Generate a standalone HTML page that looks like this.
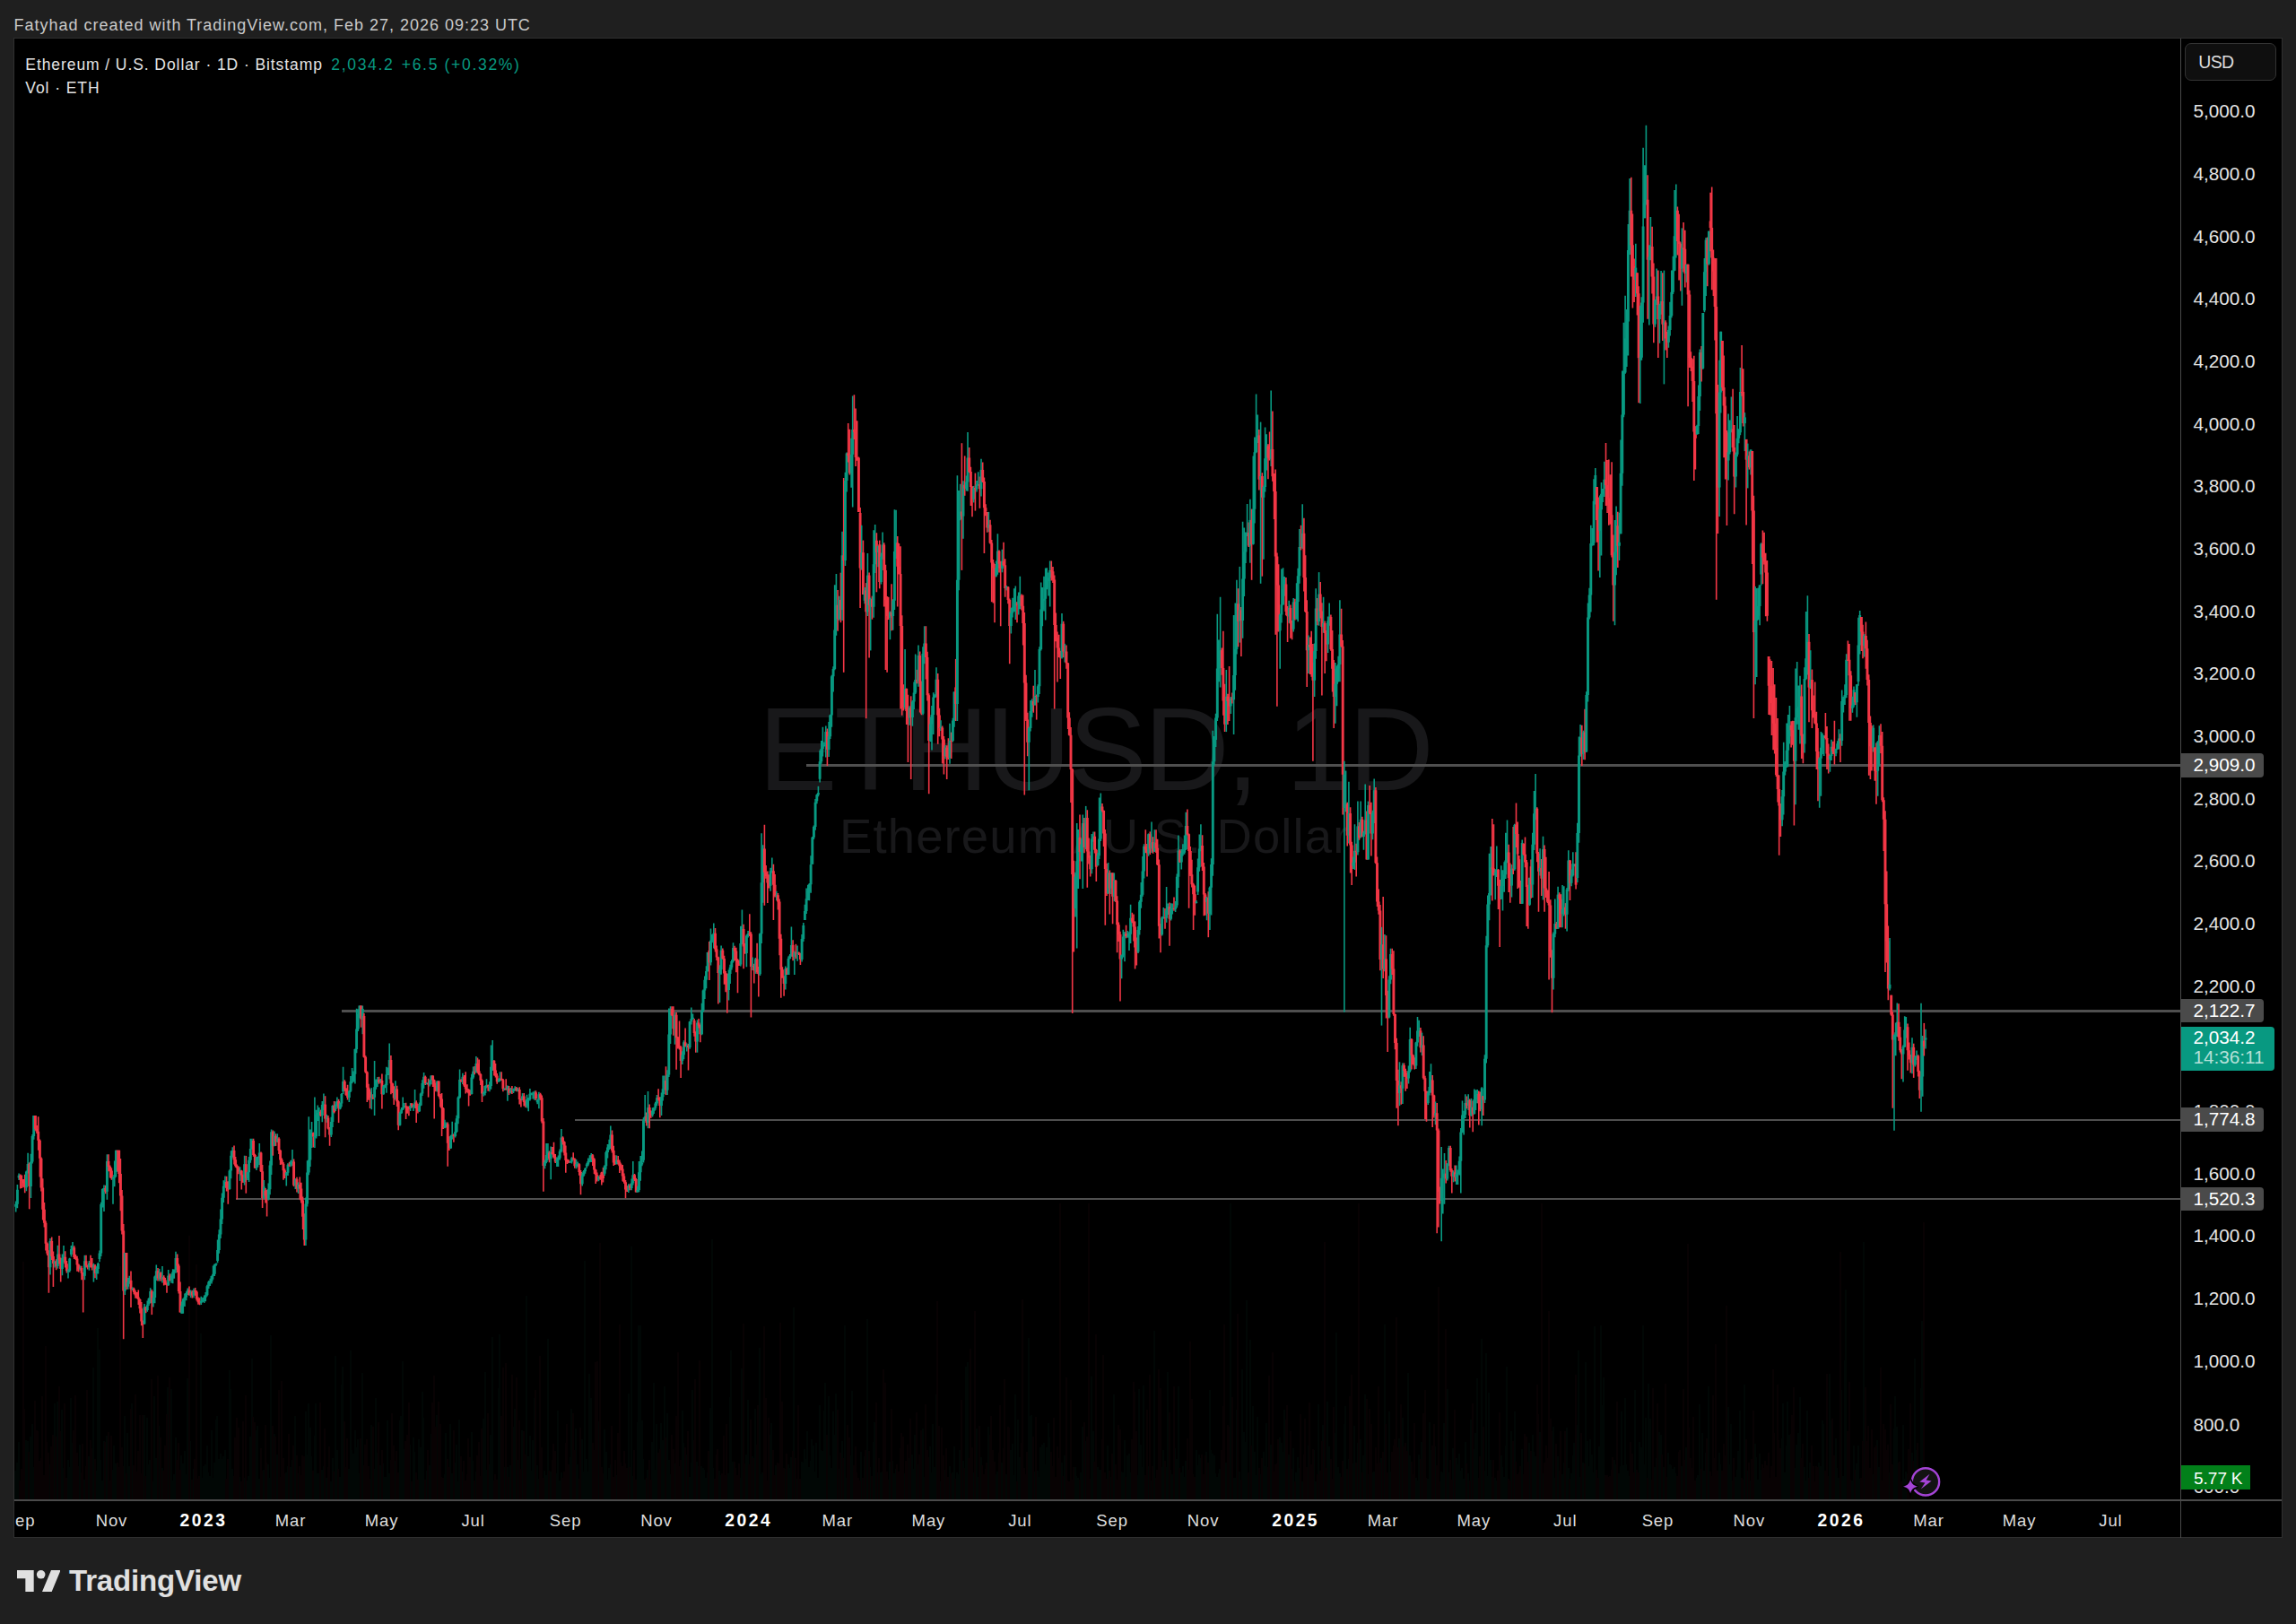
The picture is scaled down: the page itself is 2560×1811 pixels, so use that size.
<!DOCTYPE html>
<html lang="en"><head><meta charset="utf-8"><title>ETHUSD 1D</title>
<style>
html,body{margin:0;padding:0}
body{width:2560px;height:1811px;background:#1f1f1f;position:relative;overflow:hidden;font-family:"Liberation Sans",Arial,sans-serif;color:#d6d6d6}
.hdr{position:absolute;left:15.5px;top:17.3px;font-size:18px;line-height:22px;color:#c9c9c9;white-space:nowrap;letter-spacing:.99px}
.box{position:absolute;left:15px;top:42px;width:2529.7px;height:1673px;background:#000;border:1px solid #2f2f2f;box-sizing:border-box}
.vsep{position:absolute;left:2430.5px;top:43px;width:1.6px;height:1672px;background:#4a4a4a}
.hsep{position:absolute;left:16px;top:1672px;width:2528px;height:2px;background:#4a4a4a}
.wm{position:absolute;left:16px;width:2415px;text-align:center;color:#18181a;white-space:nowrap}
.wm1{top:763.8px;font-size:132px;line-height:144px;letter-spacing:-3.5px;text-indent:-6px}
.wm2{top:902.7px;font-size:54.5px;line-height:60px;letter-spacing:1.1px;text-indent:-5.5px}
.chart{position:absolute;left:0;top:0}
.leg{position:absolute;left:28.3px;white-space:nowrap;font-size:17.5px;line-height:22px;color:#e3e3e3;letter-spacing:.92px}
.leg1{top:60.7px}.leg2{top:87.3px}
.leg .g{color:#089981;position:absolute;top:0;letter-spacing:1.68px}
.axis{position:absolute;left:2432px;top:0;width:112px;height:1672px;overflow:hidden}
.pl{position:absolute;left:13.5px;font-size:20.7px;line-height:24px;height:24px;color:#e4e4e4;white-space:nowrap}
.tag{position:absolute;left:0;width:92px;height:26.8px;background:#4a4a4a;border-radius:0 4px 4px 0;font-size:20.7px;line-height:26.8px;color:#fff;text-indent:13.5px;white-space:nowrap}
.cur{position:absolute;left:0;top:1145.2px;width:104.2px;height:48.6px;background:#089981;border-radius:0 4px 4px 0;color:#fff;font-size:20.7px;white-space:nowrap}
.cur div{position:absolute;left:13.5px;line-height:24px}
.cur .t{top:22px;color:#b5e0d8}
.cur .p{top:0.1px}
.volt{position:absolute;left:0;top:1634px;width:77px;height:26.6px;background:#02801a;color:#fff;font-size:19px;line-height:29.6px;text-indent:14px;white-space:nowrap;word-spacing:-.6px;overflow:hidden}
.usd{position:absolute;left:2435.8px;top:47.9px;width:102px;height:42.2px;box-sizing:border-box;border:1px solid #333;border-radius:7px;background:#0f0f0f;font-size:19.5px;line-height:40.2px;text-indent:14.5px;color:#dcdcdc;letter-spacing:-.7px}
.taxis{position:absolute;left:16px;top:1674px;width:2415px;height:41px;overflow:hidden}
.tl{position:absolute;top:10px;width:100px;text-align:center;font-size:18.5px;line-height:24px;color:#dedede;letter-spacing:.9px;text-indent:.9px;white-space:nowrap}
.tl.b{font-weight:bold;color:#fff;font-size:19.3px;letter-spacing:2.5px;text-indent:2.5px}
.logo{position:absolute;left:19px;top:1751px}
.logot{position:absolute;left:77px;top:1743.3px;font-size:33px;line-height:40px;font-weight:bold;color:#e0e0e0;letter-spacing:-.17px;white-space:nowrap}
.ico{position:absolute;left:2118px;top:1632px}
</style></head><body>
<div class="hdr">Fatyhad created with TradingView.com, Feb 27, 2026 09:23 UTC</div>
<div class="box"></div>
<div class="wm wm1">ETHUSD, 1D</div>
<div class="wm wm2">Ethereum / U.S. Dollar</div>
<svg class="chart" width="2560" height="1811" viewBox="0 0 2560 1811" shape-rendering="crispEdges" fill="none">
<g><path stroke="#010705" stroke-width="2" d="M17 1672V1640M19 1672V1631M21 1672V1608M29 1672V1606M31 1672V1607M34 1672V1602M36 1672V1588M37 1672V1636M56 1672V1633M61 1672V1565M64 1672V1563M69 1672V1572M71 1672V1637M76 1672V1628M77 1672V1636M79 1672V1559M81 1672V1609M89 1672V1611M94 1672V1650M99 1672V1624M104 1672V1525M107 1672V1640M109 1672V1481M111 1672V1505M112 1672V1628M114 1672V1651M116 1672V1607M119 1672V1601M126 1672V1639M127 1672V1612M129 1672V1632M139 1672V1579M142 1672V1598M144 1672V1635M147 1672V1565M161 1672V1578M164 1672V1581M166 1672V1633M167 1672V1628M171 1672V1652M172 1672V1557M174 1672V1626M177 1672V1590M181 1672V1637M187 1672V1547M191 1672V1549M192 1672V1651M194 1672V1644M196 1672V1603M202 1672V1623M204 1672V1632M206 1672V1618M207 1672V1644M209 1672V1537M212 1672V1607M216 1672V1638M224 1672V1487M226 1672V1648M227 1672V1635M229 1672V1633M231 1672V1612M232 1672V1642M234 1672V1646M236 1672V1595M237 1672V1648M239 1672V1631M241 1672V1583M242 1672V1579M244 1672V1627M246 1672V1621M247 1672V1627M249 1672V1624M251 1672V1617M256 1672V1528M257 1672V1549M259 1672V1638M267 1672V1647M272 1672V1648M276 1672V1651M277 1672V1646M279 1672V1602M281 1672V1515M286 1672V1595M287 1672V1590M289 1672V1649M294 1672V1639M299 1672V1633M301 1672V1648M302 1672V1489M306 1672V1599M309 1672V1622M319 1672V1642M321 1672V1635M324 1672V1636M326 1672V1628M329 1672V1579M332 1672V1643M341 1672V1574M342 1672V1622M344 1672V1565M346 1672V1592M347 1672V1624M351 1672V1601M352 1672V1565M354 1672V1643M356 1672V1643M359 1672V1639M361 1672V1635M364 1672V1648M369 1672V1652M371 1672V1626M374 1672V1512M376 1672V1617M379 1672V1647M381 1672V1544M382 1672V1524M389 1672V1638M391 1672V1506M392 1672V1617M394 1672V1621M396 1672V1595M397 1672V1614M399 1672V1605M401 1672V1643M404 1672V1531M414 1672V1589M417 1672V1638M419 1672V1559M421 1672V1620M424 1672V1634M427 1672V1632M429 1672V1647M431 1672V1647M432 1672V1584M434 1672V1643M441 1672V1629M446 1672V1584M447 1672V1579M449 1672V1518M451 1672V1616M457 1672V1611M461 1672V1603M462 1672V1619M467 1672V1605M469 1672V1614M471 1672V1552M472 1672V1581M476 1672V1640M479 1672V1634M481 1672V1599M487 1672V1578M496 1672V1644M497 1672V1598M502 1672V1588M504 1672V1643M507 1672V1631M509 1672V1611M511 1672V1652M512 1672V1583M516 1672V1641M526 1672V1597M527 1672V1629M531 1672V1641M539 1672V1582M541 1672V1530M542 1672V1639M546 1672V1633M547 1672V1600M549 1672V1491M556 1672V1548M557 1672V1488M562 1672V1636M566 1672V1636M569 1672V1634M572 1672V1591M574 1672V1571M577 1672V1628M582 1672V1595M587 1672V1445M589 1672V1624M591 1672V1601M592 1672V1640M594 1672V1606M596 1672V1559M599 1672V1634M601 1672V1649M607 1672V1640M609 1672V1645M611 1672V1493M614 1672V1641M621 1672V1643M622 1672V1573M624 1672V1651M626 1672V1642M636 1672V1625M637 1672V1571M642 1672V1593M644 1672V1633M649 1672V1605M651 1672V1641M652 1672V1406M654 1672V1627M656 1672V1641M657 1672V1532M659 1672V1559M667 1672V1585M674 1672V1594M676 1672V1619M677 1672V1650M679 1672V1637M681 1672V1633M687 1672V1645M701 1672V1554M704 1672V1390M706 1672V1646M711 1672V1586M712 1672V1478M714 1672V1478M716 1672V1584M717 1672V1627M719 1672V1650M722 1672V1639M727 1672V1608M729 1672V1542M731 1672V1639M732 1672V1588M737 1672V1587M739 1672V1606M741 1672V1546M744 1672V1576M746 1672V1628M747 1672V1644M752 1672V1632M761 1672V1573M762 1672V1609M766 1672V1622M769 1672V1647M771 1672V1631M772 1672V1550M777 1672V1630M782 1672V1635M784 1672V1637M785 1672V1639M787 1672V1648M789 1672V1642M792 1672V1570M794 1672V1382M795 1672V1637M802 1672V1640M804 1672V1645M812 1672V1643M814 1672V1558M815 1672V1506M817 1672V1630M825 1672V1648M827 1672V1526M832 1672V1622M834 1672V1561M839 1672V1624M842 1672V1571M847 1672V1503M849 1672V1644M850 1672V1642M859 1672V1600M860 1672V1587M865 1672V1634M875 1672V1638M879 1672V1633M880 1672V1637M882 1672V1625M885 1672V1458M889 1672V1649M894 1672V1630M895 1672V1631M897 1672V1616M899 1672V1627M900 1672V1596M902 1672V1636M904 1672V1629M905 1672V1605M907 1672V1612M909 1672V1641M910 1672V1609M912 1672V1648M914 1672V1567M915 1672V1617M917 1672V1618M919 1672V1573M920 1672V1542M924 1672V1557M925 1672V1623M927 1672V1637M929 1672V1574M930 1672V1600M932 1672V1554M935 1672V1638M939 1672V1607M942 1672V1478M944 1672V1648M949 1672V1623M950 1672V1551M960 1672V1619M964 1672V1624M967 1672V1471M970 1672V1636M974 1672V1608M975 1672V1586M979 1672V1642M982 1672V1642M984 1672V1641M992 1672V1630M995 1672V1629M997 1672V1643M999 1672V1638M1009 1672V1643M1014 1672V1626M1017 1672V1622M1019 1672V1638M1020 1672V1600M1024 1672V1633M1029 1672V1593M1030 1672V1647M1037 1672V1613M1039 1672V1642M1040 1672V1588M1042 1672V1636M1044 1672V1555M1049 1672V1652M1054 1672V1639M1059 1672V1635M1062 1672V1642M1064 1672V1613M1067 1672V1642M1069 1672V1644M1070 1672V1617M1074 1672V1629M1077 1672V1524M1079 1672V1519M1085 1672V1642M1089 1672V1593M1090 1672V1647M1094 1672V1625M1102 1672V1591M1110 1672V1644M1112 1672V1641M1117 1672V1631M1122 1672V1644M1127 1672V1617M1129 1672V1610M1130 1672V1645M1132 1672V1555M1135 1672V1583M1137 1672V1625M1147 1672V1492M1149 1672V1579M1150 1672V1578M1154 1672V1641M1157 1672V1640M1159 1672V1647M1160 1672V1614M1162 1672V1611M1164 1672V1609M1165 1672V1633M1167 1672V1614M1169 1672V1587M1170 1672V1603M1184 1672V1631M1187 1672V1623M1199 1672V1636M1200 1672V1646M1202 1672V1648M1205 1672V1642M1207 1672V1591M1210 1672V1607M1217 1672V1535M1219 1672V1596M1224 1672V1636M1225 1672V1639M1227 1672V1639M1235 1672V1612M1239 1672V1647M1242 1672V1555M1250 1672V1641M1252 1672V1642M1254 1672V1606M1257 1672V1623M1259 1672V1621M1260 1672V1642M1269 1672V1645M1270 1672V1549M1272 1672V1611M1274 1672V1636M1275 1672V1545M1280 1672V1635M1284 1672V1651M1287 1672V1484M1295 1672V1636M1297 1672V1617M1300 1672V1636M1302 1672V1530M1305 1672V1639M1307 1672V1644M1310 1672V1615M1312 1672V1627M1314 1672V1546M1317 1672V1642M1319 1672V1635M1320 1672V1647M1322 1672V1629M1334 1672V1617M1335 1672V1634M1337 1672V1622M1339 1672V1626M1345 1672V1619M1349 1672V1550M1350 1672V1617M1352 1672V1621M1354 1672V1623M1355 1672V1643M1357 1672V1647M1359 1672V1643M1360 1672V1638M1367 1672V1631M1372 1672V1342M1375 1672V1648M1377 1672V1648M1379 1672V1572M1382 1672V1641M1385 1672V1527M1387 1672V1597M1389 1672V1608M1390 1672V1450M1394 1672V1494M1397 1672V1568M1399 1672V1619M1400 1672V1645M1402 1672V1580M1405 1672V1644M1409 1672V1619M1410 1672V1635M1412 1672V1587M1417 1672V1611M1427 1672V1603M1429 1672V1609M1430 1672V1619M1432 1672V1572M1437 1672V1622M1442 1672V1615M1445 1672V1642M1447 1672V1625M1449 1672V1637M1452 1672V1652M1459 1672V1612M1465 1672V1617M1467 1672V1652M1470 1672V1566M1475 1672V1589M1480 1672V1563M1482 1672V1613M1489 1672V1598M1490 1672V1486M1492 1672V1636M1494 1672V1643M1499 1672V1588M1500 1672V1568M1504 1672V1627M1509 1672V1632M1510 1672V1590M1514 1672V1609M1517 1672V1605M1520 1672V1623M1522 1672V1555M1525 1672V1644M1530 1672V1642M1532 1672V1641M1540 1672V1626M1544 1672V1477M1549 1672V1574M1550 1672V1641M1560 1672V1604M1564 1672V1581M1570 1672V1531M1572 1672V1623M1579 1672V1648M1580 1672V1651M1582 1672V1622M1585 1672V1608M1592 1672V1649M1594 1672V1586M1595 1672V1617M1600 1672V1613M1607 1672V1641M1609 1672V1642M1610 1672V1587M1614 1672V1549M1615 1672V1642M1620 1672V1615M1624 1672V1626M1625 1672V1633M1627 1672V1621M1629 1672V1640M1630 1672V1637M1632 1672V1649M1634 1672V1608M1637 1672V1643M1640 1672V1583M1644 1672V1616M1645 1672V1598M1647 1672V1537M1652 1672V1493M1655 1672V1640M1657 1672V1509M1659 1672V1646M1660 1672V1553M1662 1672V1628M1667 1672V1648M1669 1672V1651M1674 1672V1623M1675 1672V1636M1677 1672V1647M1679 1672V1612M1680 1672V1524M1685 1672V1596M1689 1672V1574M1697 1672V1616M1705 1672V1609M1709 1672V1600M1710 1672V1619M1712 1672V1624M1717 1672V1597M1720 1672V1643M1732 1672V1591M1734 1672V1648M1737 1672V1624M1742 1672V1644M1744 1672V1631M1747 1672V1592M1749 1672V1637M1752 1672V1643M1754 1672V1623M1755 1672V1609M1758 1672V1589M1760 1672V1506M1762 1672V1647M1765 1672V1631M1768 1672V1519M1770 1672V1607M1772 1672V1635M1773 1672V1605M1775 1672V1622M1777 1672V1642M1778 1672V1479M1783 1672V1613M1785 1672V1478M1787 1672V1567M1788 1672V1536M1800 1672V1628M1802 1672V1633M1805 1672V1643M1807 1672V1635M1808 1672V1574M1810 1672V1634M1812 1672V1559M1813 1672V1633M1815 1672V1640M1817 1672V1646M1823 1672V1550M1828 1672V1608M1830 1672V1614M1832 1672V1478M1833 1672V1633M1835 1672V1581M1838 1672V1543M1840 1672V1582M1845 1672V1636M1847 1672V1626M1850 1672V1597M1852 1672V1600M1855 1672V1636M1860 1672V1620M1862 1672V1633M1863 1672V1634M1865 1672V1638M1867 1672V1636M1868 1672V1643M1875 1672V1635M1880 1672V1614M1892 1672V1648M1893 1672V1645M1895 1672V1566M1898 1672V1598M1900 1672V1640M1902 1672V1620M1905 1672V1546M1917 1672V1620M1918 1672V1633M1927 1672V1569M1928 1672V1633M1930 1672V1588M1935 1672V1647M1937 1672V1639M1938 1672V1618M1940 1672V1573M1945 1672V1544M1948 1672V1640M1952 1672V1651M1957 1672V1610M1958 1672V1625M1960 1672V1650M1962 1672V1621M1963 1672V1639M1987 1672V1604M1988 1672V1565M1990 1672V1642M1992 1672V1612M1993 1672V1563M1995 1672V1600M2002 1672V1637M2003 1672V1611M2005 1672V1598M2007 1672V1558M2012 1672V1636M2013 1672V1651M2015 1672V1573M2018 1672V1631M2028 1672V1631M2030 1672V1635M2032 1672V1584M2033 1672V1588M2040 1672V1532M2042 1672V1584M2047 1672V1604M2048 1672V1637M2050 1672V1648M2053 1672V1550M2055 1672V1646M2057 1672V1517M2058 1672V1438M2065 1672V1651M2067 1672V1612M2070 1672V1632M2072 1672V1612M2073 1672V1649M2078 1672V1385M2088 1672V1644M2093 1672V1606M2095 1672V1636M2107 1672V1642M2112 1672V1593M2113 1672V1557M2115 1672V1591M2122 1672V1589M2123 1672V1649M2125 1672V1641M2132 1672V1620M2135 1672V1515M2137 1672V1617M2142 1672V1548M2143 1672V1473M2147 1672V1638"/><path stroke="#080203" stroke-width="2" d="M22 1672V1651M24 1672V1638M26 1672V1407M27 1672V1571M32 1672V1619M39 1672V1562M41 1672V1595M42 1672V1596M44 1672V1629M46 1672V1626M47 1672V1557M49 1672V1645M51 1672V1501M52 1672V1608M54 1672V1620M57 1672V1613M59 1672V1600M62 1672V1602M66 1672V1546M67 1672V1596M72 1672V1565M74 1672V1648M82 1672V1595M84 1672V1556M86 1672V1620M87 1672V1635M91 1672V1642M92 1672V1610M96 1672V1635M97 1672V1550M101 1672V1606M102 1672V1615M106 1672V1627M117 1672V1608M121 1672V1597M122 1672V1651M124 1672V1601M131 1672V1631M132 1672V1636M134 1672V1412M136 1672V1614M137 1672V1635M141 1672V1643M146 1672V1571M149 1672V1634M151 1672V1555M152 1672V1641M154 1672V1618M156 1672V1578M157 1672V1643M159 1672V1578M162 1672V1646M169 1672V1538M176 1672V1534M179 1672V1603M182 1672V1640M184 1672V1612M186 1672V1577M189 1672V1536M197 1672V1628M199 1672V1609M201 1672V1639M211 1672V1378M214 1672V1650M217 1672V1627M219 1672V1410M221 1672V1649M222 1672V1646M252 1672V1649M254 1672V1627M261 1672V1646M262 1672V1603M264 1672V1581M266 1672V1592M269 1672V1652M271 1672V1585M274 1672V1556M282 1672V1580M284 1672V1586M291 1672V1615M292 1672V1640M296 1672V1589M297 1672V1631M304 1672V1590M307 1672V1602M311 1672V1550M312 1672V1647M314 1672V1540M316 1672V1626M317 1672V1643M322 1672V1599M327 1672V1612M331 1672V1623M334 1672V1635M336 1672V1645M337 1672V1623M339 1672V1624M349 1672V1640M357 1672V1564M362 1672V1593M366 1672V1636M367 1672V1613M372 1672V1641M377 1672V1638M384 1672V1585M386 1672V1636M387 1672V1604M402 1672V1604M406 1672V1634M407 1672V1611M409 1672V1605M411 1672V1635M412 1672V1649M416 1672V1591M422 1672V1586M426 1672V1617M436 1672V1628M437 1672V1576M439 1672V1612M442 1672V1618M444 1672V1642M452 1672V1607M454 1672V1600M456 1672V1564M459 1672V1652M464 1672V1642M466 1672V1650M474 1672V1650M477 1672V1617M482 1672V1564M484 1672V1534M486 1672V1591M489 1672V1563M491 1672V1588M492 1672V1647M494 1672V1648M499 1672V1627M501 1672V1636M506 1672V1595M514 1672V1624M517 1672V1629M519 1672V1651M521 1672V1644M522 1672V1604M524 1672V1625M529 1672V1651M532 1672V1623M534 1672V1608M536 1672V1646M537 1672V1593M544 1672V1576M551 1672V1651M552 1672V1644M554 1672V1650M559 1672V1579M561 1672V1525M564 1672V1520M567 1672V1647M571 1672V1533M576 1672V1536M579 1672V1584M581 1672V1638M584 1672V1596M586 1672V1622M597 1672V1550M602 1672V1512M604 1672V1614M606 1672V1648M612 1672V1640M616 1672V1628M617 1672V1610M619 1672V1618M627 1672V1648M629 1672V1641M631 1672V1609M632 1672V1588M634 1672V1633M639 1672V1576M641 1672V1617M646 1672V1649M647 1672V1592M661 1672V1609M662 1672V1617M664 1672V1519M666 1672V1518M669 1672V1386M671 1672V1636M672 1672V1643M682 1672V1590M684 1672V1647M686 1672V1628M689 1672V1598M691 1672V1477M692 1672V1631M694 1672V1635M696 1672V1618M697 1672V1632M699 1672V1637M702 1672V1636M707 1672V1617M709 1672V1650M721 1672V1648M724 1672V1628M726 1672V1650M734 1672V1620M736 1672V1616M742 1672V1603M749 1672V1600M751 1672V1616M754 1672V1579M756 1672V1508M757 1672V1635M759 1672V1628M764 1672V1614M767 1672V1596M774 1672V1606M775 1672V1538M779 1672V1635M780 1672V1517M790 1672V1618M797 1672V1649M799 1672V1622M800 1672V1616M805 1672V1643M807 1672V1601M809 1672V1645M810 1672V1588M819 1672V1630M820 1672V1637M822 1672V1645M824 1672V1632M829 1672V1476M830 1672V1632M835 1672V1633M837 1672V1583M840 1672V1626M844 1672V1611M845 1672V1567M852 1672V1479M854 1672V1559M855 1672V1651M857 1672V1581M862 1672V1617M864 1672V1645M867 1672V1631M869 1672V1632M870 1672V1475M872 1672V1563M874 1672V1637M877 1672V1621M884 1672V1618M887 1672V1626M890 1672V1567M892 1672V1649M922 1672V1600M934 1672V1572M937 1672V1620M940 1672V1626M945 1672V1589M947 1672V1603M952 1672V1634M954 1672V1613M955 1672V1642M957 1672V1648M959 1672V1651M962 1672V1648M965 1672V1617M969 1672V1618M972 1672V1646M977 1672V1564M980 1672V1626M985 1672V1527M987 1672V1542M989 1672V1641M990 1672V1650M994 1672V1571M1000 1672V1633M1002 1672V1641M1004 1672V1615M1005 1672V1598M1007 1672V1602M1010 1672V1629M1012 1672V1611M1015 1672V1582M1022 1672V1575M1025 1672V1622M1027 1672V1595M1032 1672V1566M1034 1672V1617M1035 1672V1625M1045 1672V1451M1047 1672V1590M1050 1672V1592M1052 1672V1623M1055 1672V1615M1057 1672V1647M1060 1672V1643M1065 1672V1649M1072 1672V1561M1075 1672V1637M1080 1672V1626M1082 1672V1504M1084 1672V1614M1087 1672V1462M1092 1672V1590M1095 1672V1634M1097 1672V1644M1099 1672V1638M1100 1672V1631M1104 1672V1600M1105 1672V1579M1107 1672V1617M1109 1672V1630M1114 1672V1620M1115 1672V1567M1119 1672V1615M1120 1672V1538M1124 1672V1591M1125 1672V1592M1134 1672V1652M1139 1672V1609M1140 1672V1449M1142 1672V1637M1144 1672V1644M1145 1672V1619M1152 1672V1602M1155 1672V1580M1172 1672V1619M1174 1672V1635M1175 1672V1581M1177 1672V1647M1179 1672V1613M1180 1672V1626M1182 1672V1342M1185 1672V1646M1189 1672V1536M1190 1672V1651M1192 1672V1652M1194 1672V1561M1195 1672V1650M1197 1672V1636M1204 1672V1650M1209 1672V1586M1212 1672V1602M1214 1672V1342M1215 1672V1649M1220 1672V1630M1222 1672V1488M1229 1672V1605M1230 1672V1511M1232 1672V1642M1234 1672V1649M1237 1672V1640M1240 1672V1621M1244 1672V1633M1245 1672V1650M1247 1672V1589M1249 1672V1594M1255 1672V1647M1262 1672V1605M1264 1672V1541M1265 1672V1552M1267 1672V1596M1277 1672V1645M1279 1672V1572M1282 1672V1533M1285 1672V1635M1289 1672V1648M1290 1672V1639M1292 1672V1527M1294 1672V1548M1299 1672V1629M1304 1672V1575M1309 1672V1546M1315 1672V1637M1324 1672V1604M1325 1672V1639M1327 1672V1496M1329 1672V1560M1330 1672V1644M1332 1672V1647M1340 1672V1622M1342 1672V1644M1344 1672V1623M1347 1672V1631M1362 1672V1617M1364 1672V1568M1365 1672V1477M1369 1672V1589M1370 1672V1591M1374 1672V1558M1380 1672V1465M1384 1672V1650M1392 1672V1642M1395 1672V1612M1404 1672V1637M1407 1672V1626M1414 1672V1636M1415 1672V1534M1419 1672V1508M1420 1672V1641M1422 1672V1633M1424 1672V1632M1425 1672V1605M1434 1672V1583M1435 1672V1567M1439 1672V1596M1440 1672V1638M1444 1672V1652M1450 1672V1577M1454 1672V1622M1455 1672V1582M1457 1672V1636M1460 1672V1564M1462 1672V1633M1464 1672V1616M1469 1672V1644M1472 1672V1640M1474 1672V1607M1477 1672V1385M1479 1672V1637M1484 1672V1627M1485 1672V1649M1487 1672V1569M1495 1672V1647M1497 1672V1629M1502 1672V1638M1505 1672V1557M1507 1672V1533M1512 1672V1631M1515 1672V1342M1519 1672V1642M1524 1672V1560M1527 1672V1571M1529 1672V1588M1534 1672V1614M1535 1672V1632M1537 1672V1546M1539 1672V1631M1542 1672V1619M1545 1672V1588M1547 1672V1642M1552 1672V1619M1554 1672V1612M1555 1672V1605M1557 1672V1469M1559 1672V1614M1562 1672V1566M1565 1672V1613M1567 1672V1609M1569 1672V1618M1574 1672V1630M1575 1672V1644M1577 1672V1587M1584 1672V1627M1587 1672V1576M1589 1672V1550M1590 1672V1648M1597 1672V1612M1599 1672V1588M1602 1672V1634M1604 1672V1435M1605 1672V1652M1612 1672V1482M1617 1672V1628M1619 1672V1650M1622 1672V1572M1635 1672V1632M1639 1672V1651M1642 1672V1565M1649 1672V1648M1650 1672V1624M1654 1672V1591M1664 1672V1647M1665 1672V1628M1670 1672V1640M1672 1672V1575M1682 1672V1649M1684 1672V1651M1687 1672V1607M1690 1672V1630M1692 1672V1644M1694 1672V1642M1695 1672V1635M1699 1672V1644M1700 1672V1599M1702 1672V1602M1704 1672V1630M1707 1672V1618M1714 1672V1544M1715 1672V1577M1719 1672V1342M1722 1672V1631M1724 1672V1612M1725 1672V1626M1727 1672V1462M1729 1672V1582M1730 1672V1596M1735 1672V1610M1739 1672V1640M1740 1672V1596M1745 1672V1596M1750 1672V1649M1757 1672V1533M1763 1672V1598M1767 1672V1632M1780 1672V1639M1782 1672V1648M1790 1672V1645M1792 1672V1645M1793 1672V1647M1795 1672V1646M1797 1672V1639M1798 1672V1625M1803 1672V1563M1818 1672V1608M1820 1672V1621M1822 1672V1642M1825 1672V1639M1827 1672V1642M1837 1672V1648M1842 1672V1650M1843 1672V1548M1848 1672V1565M1853 1672V1622M1857 1672V1543M1858 1672V1647M1870 1672V1646M1872 1672V1619M1873 1672V1617M1877 1672V1549M1878 1672V1628M1882 1672V1387M1883 1672V1592M1885 1672V1626M1887 1672V1637M1888 1672V1580M1890 1672V1651M1897 1672V1638M1903 1672V1604M1907 1672V1641M1908 1672V1646M1910 1672V1556M1912 1672V1626M1913 1672V1499M1915 1672V1640M1920 1672V1640M1922 1672V1610M1923 1672V1623M1925 1672V1456M1932 1672V1651M1933 1672V1626M1942 1672V1648M1943 1672V1650M1947 1672V1605M1950 1672V1631M1953 1672V1627M1955 1672V1573M1965 1672V1633M1967 1672V1637M1968 1672V1629M1970 1672V1634M1972 1672V1620M1973 1672V1648M1975 1672V1635M1977 1672V1527M1978 1672V1598M1980 1672V1647M1982 1672V1544M1983 1672V1606M1985 1672V1615M1997 1672V1599M1998 1672V1578M2000 1672V1547M2008 1672V1626M2010 1672V1610M2017 1672V1648M2020 1672V1612M2022 1672V1635M2023 1672V1652M2025 1672V1635M2027 1672V1636M2035 1672V1640M2037 1672V1532M2038 1672V1646M2043 1672V1582M2045 1672V1623M2052 1672V1396M2060 1672V1596M2062 1672V1541M2063 1672V1650M2068 1672V1639M2075 1672V1648M2077 1672V1607M2080 1672V1547M2082 1672V1607M2083 1672V1590M2085 1672V1637M2087 1672V1594M2090 1672V1614M2092 1672V1612M2097 1672V1525M2098 1672V1651M2100 1672V1588M2102 1672V1594M2103 1672V1617M2105 1672V1611M2108 1672V1566M2110 1672V1633M2117 1672V1631M2118 1672V1630M2120 1672V1652M2127 1672V1643M2128 1672V1616M2130 1672V1565M2133 1672V1629M2138 1672V1609M2140 1672V1649M2145 1672V1363"/></g>
<g><rect x="899" y="852.4" width="1532" height="2.2" fill="#4f4f4f"/><rect x="381" y="1126.3" width="2050" height="2.2" fill="#4f4f4f"/><rect x="641" y="1247.5" width="1790" height="2.2" fill="#4f4f4f"/><rect x="263" y="1336.2" width="2168" height="2.2" fill="#4f4f4f"/></g>
<g shape-rendering="geometricPrecision"><path stroke="#089981" stroke-width="1.6" d="M17.7 1339.4V1351.4M19.4 1320.9V1347.3M21.1 1308.5V1315.9"/><path stroke="#089981" stroke-width="2.9" d="M17.7 1342.7V1345.7M19.4 1326.8V1342.7M21.1 1310.7V1313.6"/><path stroke="#f23645" stroke-width="1.6" d="M22.7 1309.4V1325.4M24.4 1310.5V1325.1M26.1 1315.0V1323.8M27.7 1309.7V1330.2"/><path stroke="#f23645" stroke-width="2.9" d="M22.7 1310.7V1315.5M24.4 1315.5V1316.7M26.1 1316.7V1319.6M27.7 1319.6V1324.2"/><path stroke="#089981" stroke-width="1.6" d="M29.4 1305.4V1328.2M31.1 1285.8V1308.6"/><path stroke="#089981" stroke-width="2.9" d="M29.4 1306.6V1324.2M31.1 1298.1V1306.6"/><path stroke="#f23645" stroke-width="1.6" d="M32.7 1296.4V1348.3"/><path stroke="#f23645" stroke-width="2.9" d="M32.7 1298.1V1322.9"/><path stroke="#089981" stroke-width="1.6" d="M34.4 1286.8V1336.1M36.1 1265.1V1297.5M37.7 1243.9V1270.7"/><path stroke="#089981" stroke-width="2.9" d="M34.4 1295.6V1322.9M36.1 1266.9V1295.6M37.7 1243.9V1266.9"/><path stroke="#f23645" stroke-width="1.6" d="M39.4 1243.9V1260.8M41.0 1254.9V1264.0M42.7 1245.2V1282.7M44.4 1270.4V1312.5M46.0 1290.5V1328.4M47.7 1314.2V1360.6M49.4 1341.0V1368.4M51.0 1361.6V1394.6M52.7 1385.4V1399.9M54.4 1394.3V1441.8"/><path stroke="#f23645" stroke-width="2.9" d="M39.4 1243.9V1258.8M41.0 1258.8V1261.7M42.7 1261.7V1271.7M44.4 1271.7V1291.7M46.0 1291.7V1324.5M47.7 1324.5V1348.8M49.4 1348.8V1363.7M51.0 1363.7V1386.7M52.7 1386.7V1397.7M54.4 1397.7V1413.3"/><path stroke="#089981" stroke-width="1.6" d="M56.0 1381.0V1421.5"/><path stroke="#089981" stroke-width="2.9" d="M56.0 1384.0V1413.3"/><path stroke="#f23645" stroke-width="1.6" d="M57.7 1379.5V1404.9M59.4 1395.5V1435.0"/><path stroke="#f23645" stroke-width="2.9" d="M57.7 1384.0V1400.9M59.4 1400.9V1409.0"/><path stroke="#089981" stroke-width="1.6" d="M61.0 1405.7V1413.6"/><path stroke="#089981" stroke-width="2.9" d="M61.0 1406.8V1409.0"/><path stroke="#f23645" stroke-width="1.6" d="M62.7 1404.2V1416.2"/><path stroke="#f23645" stroke-width="2.9" d="M62.7 1406.8V1411.9"/><path stroke="#089981" stroke-width="1.6" d="M64.4 1388.8V1414.6"/><path stroke="#089981" stroke-width="2.9" d="M64.4 1398.6V1411.9"/><path stroke="#f23645" stroke-width="1.6" d="M66.0 1378.1V1409.5M67.7 1402.5V1429.6"/><path stroke="#f23645" stroke-width="2.9" d="M66.0 1398.6V1404.7M67.7 1404.7V1415.1"/><path stroke="#089981" stroke-width="1.6" d="M69.4 1398.4V1422.3M71.0 1388.9V1407.3"/><path stroke="#089981" stroke-width="2.9" d="M69.4 1403.0V1415.1M71.0 1401.8V1403.0"/><path stroke="#f23645" stroke-width="1.6" d="M72.7 1395.3V1413.4M74.4 1406.1V1419.5"/><path stroke="#f23645" stroke-width="2.9" d="M72.7 1401.8V1409.3M74.4 1409.3V1417.2"/><path stroke="#089981" stroke-width="1.6" d="M76.0 1415.2V1425.5M77.7 1402.8V1418.8M79.4 1388.9V1401.5M81.0 1384.9V1394.4"/><path stroke="#089981" stroke-width="2.9" d="M76.0 1416.9V1417.9M77.7 1403.6V1416.9M79.4 1393.1V1398.9M81.0 1391.2V1393.1"/><path stroke="#f23645" stroke-width="1.6" d="M82.7 1389.3V1404.0M84.4 1398.9V1405.1M86.0 1400.7V1417.7M87.7 1409.4V1418.4"/><path stroke="#f23645" stroke-width="2.9" d="M82.7 1391.2V1401.9M84.4 1401.9V1403.3M86.0 1403.4V1410.4M87.7 1410.4V1415.2"/><path stroke="#089981" stroke-width="1.6" d="M89.4 1411.5V1416.9"/><path stroke="#089981" stroke-width="2.9" d="M89.4 1414.5V1415.5"/><path stroke="#f23645" stroke-width="1.6" d="M91.0 1411.8V1427.2M92.7 1419.1V1463.4"/><path stroke="#f23645" stroke-width="2.9" d="M91.0 1414.1V1419.7M92.7 1419.7V1422.8"/><path stroke="#089981" stroke-width="1.6" d="M94.4 1399.8V1427.2"/><path stroke="#089981" stroke-width="2.9" d="M94.4 1406.2V1422.8"/><path stroke="#f23645" stroke-width="1.6" d="M96.0 1399.8V1413.6M97.7 1410.4V1415.6"/><path stroke="#f23645" stroke-width="2.9" d="M96.0 1406.2V1411.2M97.7 1411.2V1413.0"/><path stroke="#089981" stroke-width="1.6" d="M99.4 1406.0V1416.7"/><path stroke="#089981" stroke-width="2.9" d="M99.4 1408.5V1413.0"/><path stroke="#f23645" stroke-width="1.6" d="M101.0 1399.8V1413.4M102.7 1403.1V1416.6"/><path stroke="#f23645" stroke-width="2.9" d="M101.0 1408.5V1410.3M102.7 1410.3V1413.3"/><path stroke="#089981" stroke-width="1.6" d="M104.4 1408.8V1429.6"/><path stroke="#089981" stroke-width="2.9" d="M104.4 1411.4V1413.3"/><path stroke="#f23645" stroke-width="1.6" d="M106.0 1409.9V1425.3"/><path stroke="#f23645" stroke-width="2.9" d="M106.0 1411.4V1419.9"/><path stroke="#089981" stroke-width="1.6" d="M107.7 1412.2V1426.9M109.4 1407.7V1420.6M111.0 1394.6V1407.2M112.7 1340.7V1400.9M114.4 1325.3V1346.5M116.0 1321.5V1351.0"/><path stroke="#089981" stroke-width="2.9" d="M107.7 1415.0V1419.9M109.4 1408.9V1415.0M111.0 1397.5V1404.1M112.7 1343.0V1397.5M114.4 1325.9V1343.0M116.0 1325.1V1326.1"/><path stroke="#f23645" stroke-width="1.6" d="M117.7 1321.8V1331.2"/><path stroke="#f23645" stroke-width="2.9" d="M117.7 1325.1V1328.8"/><path stroke="#089981" stroke-width="1.6" d="M119.4 1287.3V1337.8"/><path stroke="#089981" stroke-width="2.9" d="M119.4 1295.0V1328.8"/><path stroke="#f23645" stroke-width="1.6" d="M121.0 1287.3V1306.2M122.7 1299.5V1313.5M124.4 1302.6V1315.7"/><path stroke="#f23645" stroke-width="2.9" d="M121.0 1295.0V1301.1M122.7 1301.1V1305.4M124.4 1305.4V1314.1"/><path stroke="#089981" stroke-width="1.6" d="M126.0 1312.3V1342.8M127.7 1294.4V1323.3M129.4 1282.7V1312.6"/><path stroke="#089981" stroke-width="2.9" d="M126.0 1313.6V1314.6M127.7 1310.0V1313.6M129.4 1282.7V1307.1"/><path stroke="#f23645" stroke-width="1.6" d="M131.0 1282.7V1306.3M132.7 1282.7V1319.3M134.4 1292.1V1350.2M136.0 1326.9V1376.5M137.7 1364.9V1493.2"/><path stroke="#f23645" stroke-width="2.9" d="M131.0 1282.7V1283.7M132.7 1282.7V1308.9M134.4 1308.9V1333.5M136.0 1333.5V1372.6M137.7 1372.6V1439.6"/><path stroke="#089981" stroke-width="1.6" d="M139.3 1397.0V1444.0"/><path stroke="#089981" stroke-width="2.9" d="M139.3 1397.0V1439.6"/><path stroke="#f23645" stroke-width="1.6" d="M141.0 1397.0V1437.9"/><path stroke="#f23645" stroke-width="2.9" d="M141.0 1397.0V1434.7"/><path stroke="#089981" stroke-width="1.6" d="M142.7 1425.0V1437.7M144.3 1422.8V1431.7"/><path stroke="#089981" stroke-width="2.9" d="M142.7 1429.5V1434.7M144.3 1427.9V1429.5"/><path stroke="#f23645" stroke-width="1.6" d="M146.0 1417.4V1458.0"/><path stroke="#f23645" stroke-width="2.9" d="M146.0 1427.9V1437.6"/><path stroke="#089981" stroke-width="1.6" d="M147.7 1435.3V1439.2"/><path stroke="#089981" stroke-width="2.9" d="M147.7 1437.1V1438.1"/><path stroke="#f23645" stroke-width="1.6" d="M149.3 1435.7V1443.2M151.0 1438.9V1447.8M152.7 1441.0V1448.3M154.3 1438.6V1455.0M156.0 1448.2V1464.6M157.7 1452.1V1478.2M159.3 1472.5V1491.9"/><path stroke="#f23645" stroke-width="2.9" d="M149.3 1437.1V1440.9M151.0 1440.9V1444.5M152.7 1444.5V1446.6M154.3 1446.6V1448.9M156.0 1448.9V1459.2M157.7 1459.2V1473.4M159.3 1473.4V1476.4"/><path stroke="#089981" stroke-width="1.6" d="M161.0 1454.1V1477.0"/><path stroke="#089981" stroke-width="2.9" d="M161.0 1457.6V1476.4"/><path stroke="#f23645" stroke-width="1.6" d="M162.7 1457.1V1464.2"/><path stroke="#f23645" stroke-width="2.9" d="M162.7 1457.6V1461.1"/><path stroke="#089981" stroke-width="1.6" d="M164.3 1450.5V1462.7M166.0 1447.2V1456.1M167.7 1436.3V1453.2"/><path stroke="#089981" stroke-width="2.9" d="M164.3 1455.2V1461.1M166.0 1448.1V1454.1M167.7 1439.9V1448.1"/><path stroke="#f23645" stroke-width="1.6" d="M169.3 1438.1V1466.1"/><path stroke="#f23645" stroke-width="2.9" d="M169.3 1439.9V1452.9"/><path stroke="#089981" stroke-width="1.6" d="M171.0 1440.5V1457.5M172.7 1422.5V1453.2M174.3 1410.6V1427.9"/><path stroke="#089981" stroke-width="2.9" d="M171.0 1447.1V1452.9M172.7 1423.5V1447.1M174.3 1417.3V1423.5"/><path stroke="#f23645" stroke-width="1.6" d="M176.0 1414.0V1428.6"/><path stroke="#f23645" stroke-width="2.9" d="M176.0 1417.3V1425.5"/><path stroke="#089981" stroke-width="1.6" d="M177.7 1414.9V1428.6"/><path stroke="#089981" stroke-width="2.9" d="M177.7 1419.4V1425.5"/><path stroke="#f23645" stroke-width="1.6" d="M179.3 1418.4V1428.6"/><path stroke="#f23645" stroke-width="2.9" d="M179.3 1419.4V1426.0"/><path stroke="#089981" stroke-width="1.6" d="M181.0 1411.9V1430.5"/><path stroke="#089981" stroke-width="2.9" d="M181.0 1424.2V1426.5"/><path stroke="#f23645" stroke-width="1.6" d="M182.7 1422.3V1433.6M184.3 1425.0V1432.7M186.0 1430.2V1441.8"/><path stroke="#f23645" stroke-width="2.9" d="M182.7 1424.2V1427.6M184.3 1427.6V1431.4M186.0 1431.4V1433.2"/><path stroke="#089981" stroke-width="1.6" d="M187.7 1416.0V1433.9"/><path stroke="#089981" stroke-width="2.9" d="M187.7 1422.6V1433.2"/><path stroke="#f23645" stroke-width="1.6" d="M189.3 1420.3V1428.5"/><path stroke="#f23645" stroke-width="2.9" d="M189.3 1422.6V1427.6"/><path stroke="#089981" stroke-width="1.6" d="M191.0 1420.5V1430.7M192.7 1415.2V1431.2M194.3 1415.5V1425.8M196.0 1395.7V1419.8"/><path stroke="#089981" stroke-width="2.9" d="M191.0 1423.5V1427.6M192.7 1418.5V1423.5M194.3 1416.1V1418.5M196.0 1403.0V1416.1"/><path stroke="#f23645" stroke-width="1.6" d="M197.7 1398.4V1418.9M199.3 1409.4V1442.6M201.0 1429.4V1463.4"/><path stroke="#f23645" stroke-width="2.9" d="M197.7 1403.0V1411.6M199.3 1411.6V1440.1M201.0 1440.1V1463.4"/><path stroke="#089981" stroke-width="1.6" d="M202.7 1451.6V1464.8M204.3 1447.8V1464.8M206.0 1442.5V1456.9M207.7 1440.3V1450.3M209.3 1436.4V1444.0"/><path stroke="#089981" stroke-width="2.9" d="M202.7 1455.7V1464.8M204.3 1448.4V1455.7M206.0 1446.4V1448.4M207.7 1441.9V1446.4M209.3 1438.8V1441.9"/><path stroke="#f23645" stroke-width="1.6" d="M211.0 1434.5V1444.8"/><path stroke="#f23645" stroke-width="2.9" d="M211.0 1438.8V1444.2"/><path stroke="#089981" stroke-width="1.6" d="M212.7 1438.6V1447.2"/><path stroke="#089981" stroke-width="2.9" d="M212.7 1441.6V1444.2"/><path stroke="#f23645" stroke-width="1.6" d="M214.3 1438.9V1447.6"/><path stroke="#f23645" stroke-width="2.9" d="M214.3 1440.5V1444.6"/><path stroke="#089981" stroke-width="1.6" d="M216.0 1436.7V1447.2"/><path stroke="#089981" stroke-width="2.9" d="M216.0 1438.9V1444.6"/><path stroke="#f23645" stroke-width="1.6" d="M217.7 1435.9V1444.7M219.3 1439.3V1450.5M221.0 1446.6V1454.8M222.7 1447.2V1455.3"/><path stroke="#f23645" stroke-width="2.9" d="M217.7 1438.9V1440.4M219.3 1440.4V1448.5M221.0 1448.5V1452.2M222.7 1452.2V1453.2"/><path stroke="#089981" stroke-width="1.6" d="M224.3 1445.8V1454.9M226.0 1446.9V1452.1M227.7 1444.4V1453.0M229.3 1440.9V1451.2M231.0 1432.7V1445.6M232.7 1428.2V1436.9M234.3 1425.8V1434.1M236.0 1422.4V1431.4M237.6 1411.5V1426.7M239.3 1409.5V1422.9M241.0 1408.5V1411.7M242.6 1382.6V1408.3M244.3 1371.2V1397.7M246.0 1348.5V1381.1M247.6 1330.4V1365.0M249.3 1316.3V1340.9M251.0 1311.5V1324.6"/><path stroke="#089981" stroke-width="2.9" d="M224.3 1450.8V1453.0M226.0 1449.2V1450.8M227.7 1446.7V1449.2M229.3 1444.2V1446.7M231.0 1434.2V1444.2M232.7 1429.6V1434.2M234.3 1428.9V1429.9M236.0 1423.0V1428.9M237.6 1420.8V1423.0M239.3 1410.2V1420.8M241.0 1409.0V1410.2M242.6 1393.9V1405.9M244.3 1376.4V1393.9M246.0 1359.5V1376.4M247.6 1335.8V1359.5M249.3 1322.8V1335.8M251.0 1317.9V1322.8"/><path stroke="#f23645" stroke-width="1.6" d="M252.6 1311.7V1328.4M254.3 1317.2V1342.8"/><path stroke="#f23645" stroke-width="2.9" d="M252.6 1317.9V1324.7M254.3 1324.7V1326.0"/><path stroke="#089981" stroke-width="1.6" d="M256.0 1304.2V1326.7M257.6 1283.3V1314.3M259.3 1279.3V1290.7"/><path stroke="#089981" stroke-width="2.9" d="M256.0 1305.5V1326.0M257.6 1288.8V1305.5M259.3 1283.0V1288.8"/><path stroke="#f23645" stroke-width="1.6" d="M261.0 1277.4V1298.4M262.6 1289.9V1301.8M264.3 1298.4V1337.4M266.0 1300.4V1309.3"/><path stroke="#f23645" stroke-width="2.9" d="M261.0 1283.0V1293.2M262.6 1293.2V1300.2M264.3 1300.2V1302.4M266.0 1302.4V1306.5"/><path stroke="#089981" stroke-width="1.6" d="M267.6 1301.3V1316.9"/><path stroke="#089981" stroke-width="2.9" d="M267.6 1305.5V1306.5"/><path stroke="#f23645" stroke-width="1.6" d="M269.3 1304.8V1326.6M271.0 1309.8V1319.1"/><path stroke="#f23645" stroke-width="2.9" d="M269.3 1305.5V1310.4M271.0 1310.4V1318.1"/><path stroke="#089981" stroke-width="1.6" d="M272.6 1288.7V1321.6"/><path stroke="#089981" stroke-width="2.9" d="M272.6 1298.2V1318.1"/><path stroke="#f23645" stroke-width="1.6" d="M274.3 1288.9V1330.7"/><path stroke="#f23645" stroke-width="2.9" d="M274.3 1298.2V1313.7"/><path stroke="#089981" stroke-width="1.6" d="M276.0 1306.7V1315.9M277.6 1290.0V1317.9M279.3 1269.7V1296.7M281.0 1269.7V1282.1"/><path stroke="#089981" stroke-width="2.9" d="M276.0 1307.3V1313.7M277.6 1293.8V1307.3M279.3 1281.1V1293.8M281.0 1271.9V1281.1"/><path stroke="#f23645" stroke-width="1.6" d="M282.6 1269.7V1289.7M284.3 1286.8V1302.9"/><path stroke="#f23645" stroke-width="2.9" d="M282.6 1271.9V1288.1M284.3 1288.1V1302.4"/><path stroke="#089981" stroke-width="1.6" d="M286.0 1290.1V1305.1M287.6 1289.5V1301.5M289.3 1275.1V1299.0"/><path stroke="#089981" stroke-width="2.9" d="M286.0 1290.6V1302.4M287.6 1290.5V1291.5M289.3 1285.6V1290.5"/><path stroke="#f23645" stroke-width="1.6" d="M291.0 1284.4V1306.9M292.6 1298.9V1346.9"/><path stroke="#f23645" stroke-width="2.9" d="M291.0 1285.6V1306.3M292.6 1306.3V1335.9"/><path stroke="#089981" stroke-width="1.6" d="M294.3 1316.0V1337.5"/><path stroke="#089981" stroke-width="2.9" d="M294.3 1323.4V1335.9"/><path stroke="#f23645" stroke-width="1.6" d="M296.0 1325.0V1341.6M297.6 1326.7V1356.4"/><path stroke="#f23645" stroke-width="2.9" d="M296.0 1327.9V1333.5M297.6 1333.5V1337.5"/><path stroke="#089981" stroke-width="1.6" d="M299.3 1319.4V1338.5M301.0 1294.5V1332.3M302.6 1259.4V1310.1"/><path stroke="#089981" stroke-width="2.9" d="M299.3 1326.3V1337.5M301.0 1299.4V1326.3M302.6 1262.2V1299.4"/><path stroke="#f23645" stroke-width="1.6" d="M304.3 1260.5V1288.7"/><path stroke="#f23645" stroke-width="2.9" d="M304.3 1262.2V1277.7"/><path stroke="#089981" stroke-width="1.6" d="M306.0 1261.4V1278.2"/><path stroke="#089981" stroke-width="2.9" d="M306.0 1266.9V1277.7"/><path stroke="#f23645" stroke-width="1.6" d="M307.6 1264.3V1277.9"/><path stroke="#f23645" stroke-width="2.9" d="M307.6 1266.9V1273.2"/><path stroke="#089981" stroke-width="1.6" d="M309.3 1264.3V1274.0"/><path stroke="#089981" stroke-width="2.9" d="M309.3 1269.7V1273.2"/><path stroke="#f23645" stroke-width="1.6" d="M311.0 1268.2V1286.9M312.6 1282.0V1299.1M314.3 1291.4V1298.4M316.0 1296.1V1315.8M317.6 1303.2V1314.1"/><path stroke="#f23645" stroke-width="2.9" d="M311.0 1269.7V1283.0M312.6 1283.0V1293.6M314.3 1293.6V1297.8M316.0 1297.8V1305.3M317.6 1305.3V1310.6"/><path stroke="#089981" stroke-width="1.6" d="M319.3 1306.9V1322.5M321.0 1297.2V1311.0"/><path stroke="#089981" stroke-width="2.9" d="M319.3 1307.8V1310.6M321.0 1298.8V1307.8"/><path stroke="#f23645" stroke-width="1.6" d="M322.6 1295.8V1301.0"/><path stroke="#f23645" stroke-width="2.9" d="M322.6 1298.6V1299.6"/><path stroke="#089981" stroke-width="1.6" d="M324.3 1293.7V1301.3M326.0 1281.9V1299.9"/><path stroke="#089981" stroke-width="2.9" d="M324.3 1295.4V1298.4M326.0 1295.4V1296.4"/><path stroke="#f23645" stroke-width="1.6" d="M327.6 1292.5V1323.1"/><path stroke="#f23645" stroke-width="2.9" d="M327.6 1295.4V1321.7"/><path stroke="#089981" stroke-width="1.6" d="M329.3 1314.1V1326.1"/><path stroke="#089981" stroke-width="2.9" d="M329.3 1315.6V1321.7"/><path stroke="#f23645" stroke-width="1.6" d="M331.0 1312.7V1329.6"/><path stroke="#f23645" stroke-width="2.9" d="M331.0 1315.1V1325.6"/><path stroke="#089981" stroke-width="1.6" d="M332.6 1318.4V1331.0"/><path stroke="#089981" stroke-width="2.9" d="M332.6 1321.0V1325.6"/><path stroke="#f23645" stroke-width="1.6" d="M334.3 1312.4V1337.4M335.9 1318.7V1341.4M337.6 1334.4V1371.0M339.3 1353.3V1388.9"/><path stroke="#f23645" stroke-width="2.9" d="M334.3 1321.0V1325.5M335.9 1325.5V1338.4M337.6 1338.4V1356.8M339.3 1356.8V1382.5"/><path stroke="#089981" stroke-width="1.6" d="M340.9 1335.6V1388.9M342.6 1294.3V1345.5M344.3 1245.3V1310.3M345.9 1259.4V1301.0M347.6 1251.1V1279.9"/><path stroke="#089981" stroke-width="2.9" d="M340.9 1342.4V1382.5M342.6 1307.4V1342.4M344.3 1293.6V1307.4M345.9 1264.2V1293.6M347.6 1263.4V1264.4"/><path stroke="#f23645" stroke-width="1.6" d="M349.3 1262.6V1279.5"/><path stroke="#f23645" stroke-width="2.9" d="M349.3 1263.4V1267.5"/><path stroke="#089981" stroke-width="1.6" d="M350.9 1223.6V1279.9M352.6 1237.8V1269.5M354.3 1232.4V1250.1M355.9 1234.9V1267.0"/><path stroke="#089981" stroke-width="2.9" d="M350.9 1267.3V1268.3M352.6 1242.7V1267.3M354.3 1240.9V1242.7M355.9 1239.8V1240.9"/><path stroke="#f23645" stroke-width="1.6" d="M357.6 1237.6V1245.0"/><path stroke="#f23645" stroke-width="2.9" d="M357.6 1239.8V1244.1"/><path stroke="#089981" stroke-width="1.6" d="M359.3 1228.1V1251.3M360.9 1219.6V1237.9"/><path stroke="#089981" stroke-width="2.9" d="M359.3 1232.0V1244.1M360.9 1231.6V1232.6"/><path stroke="#f23645" stroke-width="1.6" d="M362.6 1222.2V1268.3"/><path stroke="#f23645" stroke-width="2.9" d="M362.6 1231.6V1247.6"/><path stroke="#089981" stroke-width="1.6" d="M364.3 1242.8V1251.8"/><path stroke="#089981" stroke-width="2.9" d="M364.3 1246.4V1247.6"/><path stroke="#f23645" stroke-width="1.6" d="M365.9 1244.0V1259.6M367.6 1256.9V1277.8"/><path stroke="#f23645" stroke-width="2.9" d="M365.9 1246.4V1258.4M367.6 1258.4V1265.5"/><path stroke="#089981" stroke-width="1.6" d="M369.3 1245.7V1267.9M370.9 1232.2V1257.0"/><path stroke="#089981" stroke-width="2.9" d="M369.3 1251.1V1265.5M370.9 1233.0V1251.1"/><path stroke="#f23645" stroke-width="1.6" d="M372.6 1228.0V1241.5"/><path stroke="#f23645" stroke-width="2.9" d="M372.6 1233.0V1240.2"/><path stroke="#089981" stroke-width="1.6" d="M374.3 1228.4V1239.0M375.9 1223.6V1234.0"/><path stroke="#089981" stroke-width="2.9" d="M374.3 1231.4V1236.7M375.9 1228.0V1231.4"/><path stroke="#f23645" stroke-width="1.6" d="M377.6 1225.8V1252.1"/><path stroke="#f23645" stroke-width="2.9" d="M377.6 1228.0V1236.2"/><path stroke="#089981" stroke-width="1.6" d="M379.3 1229.6V1237.3M380.9 1218.9V1234.2M382.6 1189.7V1220.0"/><path stroke="#089981" stroke-width="2.9" d="M379.3 1230.6V1236.2M380.9 1219.9V1230.6M382.6 1206.1V1217.3"/><path stroke="#f23645" stroke-width="1.6" d="M384.3 1204.3V1216.7M385.9 1213.3V1221.8M387.6 1209.8V1226.4"/><path stroke="#f23645" stroke-width="2.9" d="M384.3 1206.1V1214.3M385.9 1214.3V1221.2M387.6 1221.2V1223.9"/><path stroke="#089981" stroke-width="1.6" d="M389.3 1215.8V1229.0M390.9 1199.9V1217.9M392.6 1191.1V1208.2M394.3 1194.6V1206.4M395.9 1169.5V1208.6M397.6 1124.7V1174.3M399.3 1125.2V1149.9M400.9 1121.5V1134.9"/><path stroke="#089981" stroke-width="2.9" d="M389.3 1216.8V1223.9M390.9 1206.2V1216.8M392.6 1205.8V1206.8M394.3 1197.8V1204.9M395.9 1170.1V1197.8M397.6 1147.5V1170.1M399.3 1131.0V1147.5M400.9 1121.5V1131.0"/><path stroke="#f23645" stroke-width="1.6" d="M402.6 1121.5V1145.7"/><path stroke="#f23645" stroke-width="2.9" d="M402.6 1121.5V1136.5"/><path stroke="#089981" stroke-width="1.6" d="M404.3 1121.5V1153.2"/><path stroke="#089981" stroke-width="2.9" d="M404.3 1125.0V1136.5"/><path stroke="#f23645" stroke-width="1.6" d="M405.9 1130.1V1179.4M407.6 1177.2V1196.8M409.3 1194.6V1229.0M410.9 1208.8V1226.8M412.6 1214.4V1235.9"/><path stroke="#f23645" stroke-width="2.9" d="M405.9 1132.9V1178.7M407.6 1178.7V1195.5M409.3 1195.5V1212.8M410.9 1212.8V1217.4M412.6 1217.4V1224.0"/><path stroke="#089981" stroke-width="1.6" d="M414.3 1213.1V1237.2"/><path stroke="#089981" stroke-width="2.9" d="M414.3 1223.8V1224.8"/><path stroke="#f23645" stroke-width="1.6" d="M415.9 1220.3V1226.0"/><path stroke="#f23645" stroke-width="2.9" d="M415.9 1223.8V1224.8"/><path stroke="#089981" stroke-width="1.6" d="M417.6 1183.0V1243.9M419.3 1203.4V1214.8M420.9 1201.0V1211.9"/><path stroke="#089981" stroke-width="2.9" d="M417.6 1212.2V1223.8M419.3 1204.7V1212.2M420.9 1204.1V1205.1"/><path stroke="#f23645" stroke-width="1.6" d="M422.6 1200.8V1208.7"/><path stroke="#f23645" stroke-width="2.9" d="M422.6 1204.1V1206.9"/><path stroke="#089981" stroke-width="1.6" d="M424.3 1202.9V1207.9"/><path stroke="#089981" stroke-width="2.9" d="M424.3 1205.0V1206.9"/><path stroke="#f23645" stroke-width="1.6" d="M425.9 1197.4V1236.6"/><path stroke="#f23645" stroke-width="2.9" d="M425.9 1205.0V1220.2"/><path stroke="#089981" stroke-width="1.6" d="M427.6 1210.1V1220.8M429.3 1208.8V1213.3M430.9 1189.8V1218.7M432.6 1190.5V1198.9M434.2 1163.5V1203.5"/><path stroke="#089981" stroke-width="2.9" d="M427.6 1211.4V1220.2M429.3 1210.2V1211.4M430.9 1198.2V1210.2M432.6 1197.7V1198.7M434.2 1181.9V1197.7"/><path stroke="#f23645" stroke-width="1.6" d="M435.9 1177.1V1220.2M437.6 1207.5V1219.0M439.2 1211.3V1232.1"/><path stroke="#f23645" stroke-width="2.9" d="M435.9 1181.9V1208.2M437.6 1208.2V1217.8M439.2 1217.8V1224.5"/><path stroke="#089981" stroke-width="1.6" d="M440.9 1205.2V1226.5"/><path stroke="#089981" stroke-width="2.9" d="M440.9 1214.6V1224.5"/><path stroke="#f23645" stroke-width="1.6" d="M442.6 1210.8V1233.9M444.2 1227.3V1260.2"/><path stroke="#f23645" stroke-width="2.9" d="M442.6 1214.6V1228.2M444.2 1228.2V1254.8"/><path stroke="#089981" stroke-width="1.6" d="M445.9 1239.8V1255.6M447.6 1235.0V1242.1M449.2 1223.6V1238.1M450.9 1230.1V1235.4"/><path stroke="#089981" stroke-width="2.9" d="M445.9 1241.2V1254.8M447.6 1237.2V1241.2M449.2 1234.9V1237.2M450.9 1233.5V1234.9"/><path stroke="#f23645" stroke-width="1.6" d="M452.6 1229.8V1248.0M454.2 1233.4V1241.8M455.9 1233.4V1244.3"/><path stroke="#f23645" stroke-width="2.9" d="M452.6 1233.5V1234.5M454.2 1234.0V1235.0M455.9 1234.5V1236.8"/><path stroke="#089981" stroke-width="1.6" d="M457.6 1230.0V1239.0"/><path stroke="#089981" stroke-width="2.9" d="M457.6 1233.0V1236.0"/><path stroke="#f23645" stroke-width="1.6" d="M459.2 1230.0V1235.2"/><path stroke="#f23645" stroke-width="2.9" d="M459.2 1230.8V1233.1"/><path stroke="#089981" stroke-width="1.6" d="M460.9 1232.0V1239.0M462.6 1214.9V1235.8"/><path stroke="#089981" stroke-width="2.9" d="M460.9 1232.8V1233.8M462.6 1229.4V1232.8"/><path stroke="#f23645" stroke-width="1.6" d="M464.2 1227.3V1252.1M465.9 1231.0V1241.4"/><path stroke="#f23645" stroke-width="2.9" d="M464.2 1229.4V1235.9M465.9 1235.9V1239.2"/><path stroke="#089981" stroke-width="1.6" d="M467.6 1229.6V1240.1M469.2 1218.4V1233.3M470.9 1204.3V1222.1M472.6 1196.0V1213.7"/><path stroke="#089981" stroke-width="2.9" d="M467.6 1232.7V1239.2M469.2 1219.5V1232.7M470.9 1208.0V1219.5M472.6 1200.7V1208.0"/><path stroke="#f23645" stroke-width="1.6" d="M474.2 1199.4V1210.1"/><path stroke="#f23645" stroke-width="2.9" d="M474.2 1200.7V1208.2"/><path stroke="#089981" stroke-width="1.6" d="M475.9 1207.0V1209.5"/><path stroke="#089981" stroke-width="2.9" d="M475.9 1208.0V1209.0"/><path stroke="#f23645" stroke-width="1.6" d="M477.6 1202.8V1223.6"/><path stroke="#f23645" stroke-width="2.9" d="M477.6 1208.0V1209.4"/><path stroke="#089981" stroke-width="1.6" d="M479.2 1203.7V1211.6M480.9 1199.2V1209.2"/><path stroke="#089981" stroke-width="2.9" d="M479.2 1204.7V1209.4M480.9 1199.6V1204.7"/><path stroke="#f23645" stroke-width="1.6" d="M482.6 1199.2V1211.9M484.2 1203.7V1247.5M485.9 1207.6V1217.2"/><path stroke="#f23645" stroke-width="2.9" d="M482.6 1199.6V1204.4M484.2 1204.4V1211.1M485.9 1211.1V1216.0"/><path stroke="#089981" stroke-width="1.6" d="M487.6 1205.5V1217.5"/><path stroke="#089981" stroke-width="2.9" d="M487.6 1205.5V1216.0"/><path stroke="#f23645" stroke-width="1.6" d="M489.2 1205.5V1223.2M490.9 1220.0V1234.4M492.6 1218.9V1267.0M494.2 1234.9V1259.1"/><path stroke="#f23645" stroke-width="2.9" d="M489.2 1205.5V1221.9M490.9 1221.9V1225.4M492.6 1225.4V1235.8M494.2 1235.8V1257.5"/><path stroke="#089981" stroke-width="1.6" d="M495.9 1248.8V1258.2M497.6 1251.5V1257.5"/><path stroke="#089981" stroke-width="2.9" d="M495.9 1255.8V1257.5M497.6 1253.4V1255.8"/><path stroke="#f23645" stroke-width="1.6" d="M499.2 1251.4V1300.8M500.9 1267.2V1282.9"/><path stroke="#f23645" stroke-width="2.9" d="M499.2 1253.4V1274.7M500.9 1274.7V1280.6"/><path stroke="#089981" stroke-width="1.6" d="M502.6 1265.8V1281.1M504.2 1250.7V1270.4"/><path stroke="#089981" stroke-width="2.9" d="M502.6 1266.9V1280.6M504.2 1265.5V1266.9"/><path stroke="#f23645" stroke-width="1.6" d="M505.9 1264.2V1273.8"/><path stroke="#f23645" stroke-width="2.9" d="M505.9 1265.5V1267.1"/><path stroke="#089981" stroke-width="1.6" d="M507.6 1251.7V1268.6M509.2 1243.7V1263.0M510.9 1222.5V1253.2M512.6 1192.5V1225.1"/><path stroke="#089981" stroke-width="2.9" d="M507.6 1262.0V1267.1M509.2 1247.2V1262.0M510.9 1223.8V1247.2M512.6 1204.1V1223.8"/><path stroke="#f23645" stroke-width="1.6" d="M514.2 1203.3V1206.8"/><path stroke="#f23645" stroke-width="2.9" d="M514.2 1204.1V1205.9"/><path stroke="#089981" stroke-width="1.6" d="M515.9 1196.8V1209.0"/><path stroke="#089981" stroke-width="2.9" d="M515.9 1200.8V1205.9"/><path stroke="#f23645" stroke-width="1.6" d="M517.6 1199.1V1211.9M519.2 1195.2V1219.4M520.9 1209.2V1218.2M522.6 1214.2V1233.6M524.2 1215.3V1221.7"/><path stroke="#f23645" stroke-width="2.9" d="M517.6 1200.8V1210.5M519.2 1210.5V1214.3M520.9 1214.3V1215.3M522.6 1215.3V1219.2M524.2 1219.2V1220.2"/><path stroke="#089981" stroke-width="1.6" d="M525.9 1197.7V1220.5M527.6 1189.6V1203.2"/><path stroke="#089981" stroke-width="2.9" d="M525.9 1201.5V1219.9M527.6 1194.7V1201.5"/><path stroke="#f23645" stroke-width="1.6" d="M529.2 1189.1V1198.3"/><path stroke="#f23645" stroke-width="2.9" d="M529.2 1194.7V1195.8"/><path stroke="#089981" stroke-width="1.6" d="M530.9 1178.1V1196.4"/><path stroke="#089981" stroke-width="2.9" d="M530.9 1186.0V1195.8"/><path stroke="#f23645" stroke-width="1.6" d="M532.5 1179.4V1196.7M534.2 1181.6V1199.3M535.9 1197.0V1210.1M537.5 1203.4V1229.0"/><path stroke="#f23645" stroke-width="2.9" d="M532.5 1186.0V1194.5M534.2 1194.5V1198.0M535.9 1198.0V1205.1M537.5 1205.1V1219.5"/><path stroke="#089981" stroke-width="1.6" d="M539.2 1217.2V1222.4M540.9 1210.4V1221.5M542.5 1203.3V1213.5"/><path stroke="#089981" stroke-width="2.9" d="M539.2 1218.9V1219.9M540.9 1210.9V1218.9M542.5 1210.3V1211.3"/><path stroke="#f23645" stroke-width="1.6" d="M544.2 1209.4V1216.8"/><path stroke="#f23645" stroke-width="2.9" d="M544.2 1210.3V1212.5"/><path stroke="#089981" stroke-width="1.6" d="M545.9 1206.2V1217.3M547.5 1165.4V1214.7M549.2 1159.9V1193.9"/><path stroke="#089981" stroke-width="2.9" d="M545.9 1211.1V1212.5M547.5 1189.8V1211.1M549.2 1182.8V1189.8"/><path stroke="#f23645" stroke-width="1.6" d="M550.9 1182.2V1199.4M552.5 1186.1V1201.6M554.2 1197.0V1208.7"/><path stroke="#f23645" stroke-width="2.9" d="M550.9 1182.8V1193.6M552.5 1193.6V1199.4M554.2 1199.4V1206.3"/><path stroke="#089981" stroke-width="1.6" d="M555.9 1202.4V1206.8M557.5 1195.2V1206.0"/><path stroke="#089981" stroke-width="2.9" d="M555.9 1204.9V1206.3M557.5 1202.8V1204.9"/><path stroke="#f23645" stroke-width="1.6" d="M559.2 1195.2V1205.0M560.9 1202.9V1217.3"/><path stroke="#f23645" stroke-width="2.9" d="M559.2 1202.8V1204.2M560.9 1204.2V1214.3"/><path stroke="#089981" stroke-width="1.6" d="M562.5 1213.3V1216.0"/><path stroke="#089981" stroke-width="2.9" d="M562.5 1213.9V1214.9"/><path stroke="#f23645" stroke-width="1.6" d="M564.2 1203.3V1215.8"/><path stroke="#f23645" stroke-width="2.9" d="M564.2 1213.9V1214.9"/><path stroke="#089981" stroke-width="1.6" d="M565.9 1210.4V1227.7"/><path stroke="#089981" stroke-width="2.9" d="M565.9 1210.9V1214.7"/><path stroke="#f23645" stroke-width="1.6" d="M567.5 1211.0V1221.1"/><path stroke="#f23645" stroke-width="2.9" d="M567.5 1214.0V1218.7"/><path stroke="#089981" stroke-width="1.6" d="M569.2 1213.1V1219.5"/><path stroke="#089981" stroke-width="2.9" d="M569.2 1216.7V1218.7"/><path stroke="#f23645" stroke-width="1.6" d="M570.9 1211.0V1220.0"/><path stroke="#f23645" stroke-width="2.9" d="M570.9 1216.7V1217.7"/><path stroke="#089981" stroke-width="1.6" d="M572.5 1213.7V1219.0M574.2 1211.2V1216.6"/><path stroke="#089981" stroke-width="2.9" d="M572.5 1214.3V1217.0M574.2 1213.4V1214.4"/><path stroke="#f23645" stroke-width="1.6" d="M575.9 1212.1V1217.2"/><path stroke="#f23645" stroke-width="2.9" d="M575.9 1213.4V1216.4"/><path stroke="#089981" stroke-width="1.6" d="M577.5 1213.1V1217.3"/><path stroke="#089981" stroke-width="2.9" d="M577.5 1215.0V1216.4"/><path stroke="#f23645" stroke-width="1.6" d="M579.2 1212.2V1231.5M580.9 1225.0V1234.5"/><path stroke="#f23645" stroke-width="2.9" d="M579.2 1215.0V1225.9M580.9 1225.9V1226.9"/><path stroke="#089981" stroke-width="1.6" d="M582.5 1219.1V1227.3"/><path stroke="#089981" stroke-width="2.9" d="M582.5 1222.4V1226.4"/><path stroke="#f23645" stroke-width="1.6" d="M584.2 1219.1V1233.5M585.9 1227.4V1234.9"/><path stroke="#f23645" stroke-width="2.9" d="M584.2 1222.4V1229.1M585.9 1229.1V1233.0"/><path stroke="#089981" stroke-width="1.6" d="M587.5 1220.8V1235.4M589.2 1224.1V1239.3M590.9 1214.1V1227.5M592.5 1218.4V1221.2M594.2 1217.5V1225.4M595.9 1216.4V1226.8"/><path stroke="#089981" stroke-width="2.9" d="M587.5 1226.0V1233.0M589.2 1225.9V1226.9M590.9 1219.7V1225.9M592.5 1219.6V1220.6M594.2 1219.4V1220.4M595.9 1218.4V1219.4"/><path stroke="#f23645" stroke-width="1.6" d="M597.5 1216.2V1227.0"/><path stroke="#f23645" stroke-width="2.9" d="M597.5 1218.2V1225.0"/><path stroke="#089981" stroke-width="1.6" d="M599.2 1225.8V1231.2M600.9 1217.7V1236.2"/><path stroke="#089981" stroke-width="2.9" d="M599.2 1226.5V1229.2M600.9 1220.2V1226.5"/><path stroke="#f23645" stroke-width="1.6" d="M602.5 1218.7V1226.7M604.2 1221.5V1252.5M605.9 1247.1V1328.8"/><path stroke="#f23645" stroke-width="2.9" d="M602.5 1220.2V1224.3M604.2 1224.3V1250.4M605.9 1250.4V1300.1"/><path stroke="#089981" stroke-width="1.6" d="M607.5 1293.5V1303.2M609.2 1275.1V1297.2M610.9 1275.1V1294.1"/><path stroke="#089981" stroke-width="2.9" d="M607.5 1296.1V1300.1M609.2 1287.9V1296.1M610.9 1283.9V1287.9"/><path stroke="#f23645" stroke-width="1.6" d="M612.5 1283.5V1296.3"/><path stroke="#f23645" stroke-width="2.9" d="M612.5 1285.7V1292.1"/><path stroke="#089981" stroke-width="1.6" d="M614.2 1278.5V1315.2"/><path stroke="#089981" stroke-width="2.9" d="M614.2 1284.9V1292.1"/><path stroke="#f23645" stroke-width="1.6" d="M615.9 1278.9V1287.4M617.5 1273.8V1291.7M619.2 1287.0V1296.9"/><path stroke="#f23645" stroke-width="2.9" d="M615.9 1284.9V1286.8M617.5 1286.8V1290.4M619.2 1290.4V1295.6"/><path stroke="#089981" stroke-width="1.6" d="M620.9 1290.4V1301.0M622.5 1288.5V1301.0M624.2 1281.5V1293.4M625.9 1259.0V1285.3"/><path stroke="#089981" stroke-width="2.9" d="M620.9 1293.0V1295.6M622.5 1291.5V1293.0M624.2 1283.9V1291.5M625.9 1268.6V1283.9"/><path stroke="#f23645" stroke-width="1.6" d="M627.5 1267.2V1276.4M629.2 1272.4V1288.5M630.8 1277.6V1307.8M632.5 1292.5V1297.9M634.2 1293.2V1296.7"/><path stroke="#f23645" stroke-width="2.9" d="M627.5 1268.6V1273.2M629.2 1273.2V1285.6M630.8 1285.6V1293.9M632.5 1293.9V1295.7M634.2 1295.7V1296.7"/><path stroke="#089981" stroke-width="1.6" d="M635.8 1294.7V1296.6M637.5 1290.2V1297.4"/><path stroke="#089981" stroke-width="2.9" d="M635.8 1295.5V1296.5M637.5 1291.6V1295.5"/><path stroke="#f23645" stroke-width="1.6" d="M639.2 1285.3V1293.4M640.8 1291.5V1302.8"/><path stroke="#f23645" stroke-width="2.9" d="M639.2 1291.6V1292.6M640.8 1292.2V1300.3"/><path stroke="#089981" stroke-width="1.6" d="M642.5 1293.1V1303.2M644.2 1295.6V1301.5"/><path stroke="#089981" stroke-width="2.9" d="M642.5 1298.3V1300.3M644.2 1298.2V1299.2"/><path stroke="#f23645" stroke-width="1.6" d="M645.8 1297.2V1310.7M647.5 1305.0V1332.2"/><path stroke="#f23645" stroke-width="2.9" d="M645.8 1298.2V1307.0M647.5 1307.0V1320.3"/><path stroke="#089981" stroke-width="1.6" d="M649.2 1307.7V1322.4M650.8 1304.9V1311.9M652.5 1302.0V1308.7M654.2 1296.8V1302.8M655.8 1291.6V1300.3M657.5 1288.3V1296.3M659.2 1286.1V1296.1"/><path stroke="#089981" stroke-width="2.9" d="M649.2 1310.7V1320.3M650.8 1306.3V1310.7M652.5 1303.2V1306.3M654.2 1298.6V1300.5M655.8 1295.1V1298.6M657.5 1293.9V1295.1M659.2 1288.3V1293.9"/><path stroke="#f23645" stroke-width="1.6" d="M660.8 1287.0V1300.1M662.5 1291.2V1308.9M664.2 1303.7V1320.0M665.8 1307.4V1317.4"/><path stroke="#f23645" stroke-width="2.9" d="M660.8 1288.3V1292.5M662.5 1292.5V1304.6M664.2 1304.6V1310.0M665.8 1310.3V1315.4"/><path stroke="#089981" stroke-width="1.6" d="M667.5 1311.3V1317.2"/><path stroke="#089981" stroke-width="2.9" d="M667.5 1311.9V1315.4"/><path stroke="#f23645" stroke-width="1.6" d="M669.2 1310.1V1315.8M670.8 1306.8V1321.4M672.5 1302.0V1318.5"/><path stroke="#f23645" stroke-width="2.9" d="M669.2 1312.7V1313.7M670.8 1307.6V1310.1M672.5 1310.1V1314.1"/><path stroke="#089981" stroke-width="1.6" d="M674.2 1299.3V1311.0M675.8 1283.3V1304.2M677.5 1276.1V1291.5M679.2 1270.7V1282.3M680.8 1255.5V1281.2"/><path stroke="#089981" stroke-width="2.9" d="M674.2 1300.3V1308.8M675.8 1285.1V1300.3M677.5 1279.5V1285.1M679.2 1276.5V1279.5M680.8 1265.4V1276.5"/><path stroke="#f23645" stroke-width="1.6" d="M682.5 1260.4V1285.6M684.2 1277.7V1300.1M685.8 1288.2V1298.9"/><path stroke="#f23645" stroke-width="2.9" d="M682.5 1265.4V1283.1M684.2 1283.1V1296.5M685.8 1296.5V1298.0"/><path stroke="#089981" stroke-width="1.6" d="M687.5 1288.4V1298.5"/><path stroke="#089981" stroke-width="2.9" d="M687.5 1293.7V1298.0"/><path stroke="#f23645" stroke-width="1.6" d="M689.2 1289.0V1298.7M690.8 1293.4V1307.9M692.5 1297.6V1305.3M694.2 1299.0V1317.2M695.8 1308.5V1319.8M697.5 1316.1V1336.3M699.2 1322.6V1328.9"/><path stroke="#f23645" stroke-width="2.9" d="M689.2 1293.7V1295.7M690.8 1295.7V1300.3M692.5 1300.3V1303.4M694.2 1303.4V1311.4M695.8 1311.4V1318.1M697.5 1318.2V1326.4M699.2 1326.4V1327.5"/><path stroke="#089981" stroke-width="1.6" d="M700.8 1320.2V1330.1"/><path stroke="#089981" stroke-width="2.9" d="M700.8 1321.9V1327.5"/><path stroke="#f23645" stroke-width="1.6" d="M702.5 1320.2V1327.2"/><path stroke="#f23645" stroke-width="2.9" d="M702.5 1321.9V1324.8"/><path stroke="#089981" stroke-width="1.6" d="M704.2 1314.6V1327.2M705.8 1295.1V1321.4"/><path stroke="#089981" stroke-width="2.9" d="M704.2 1319.2V1324.9M705.8 1310.3V1319.2"/><path stroke="#f23645" stroke-width="1.6" d="M707.5 1309.1V1316.9M709.2 1313.8V1329.5"/><path stroke="#f23645" stroke-width="2.9" d="M707.5 1310.3V1315.0M709.2 1315.0V1329.5"/><path stroke="#089981" stroke-width="1.6" d="M710.8 1322.8V1329.5M712.5 1295.0V1329.3M714.2 1289.0V1316.8M715.8 1283.6V1300.2M717.5 1246.2V1296.4M719.2 1221.1V1250.0"/><path stroke="#089981" stroke-width="2.9" d="M710.8 1327.0V1329.5M712.5 1307.3V1327.0M714.2 1298.6V1307.3M715.8 1297.0V1298.6M717.5 1249.3V1293.8M719.2 1244.9V1249.3"/><path stroke="#f23645" stroke-width="1.6" d="M720.8 1240.4V1255.6"/><path stroke="#f23645" stroke-width="2.9" d="M720.8 1244.9V1251.9"/><path stroke="#089981" stroke-width="1.6" d="M722.5 1217.0V1258.2"/><path stroke="#089981" stroke-width="2.9" d="M722.5 1235.1V1251.9"/><path stroke="#f23645" stroke-width="1.6" d="M724.2 1231.4V1258.2M725.8 1238.2V1246.7"/><path stroke="#f23645" stroke-width="2.9" d="M724.2 1235.1V1241.4M725.8 1241.4V1243.5"/><path stroke="#089981" stroke-width="1.6" d="M727.5 1235.2V1245.4M729.1 1234.8V1242.1M730.8 1228.7V1237.8M732.5 1220.9V1232.9"/><path stroke="#089981" stroke-width="2.9" d="M727.5 1239.1V1243.5M729.1 1236.5V1239.1M730.8 1230.4V1235.6M732.5 1224.3V1230.4"/><path stroke="#f23645" stroke-width="1.6" d="M734.1 1214.3V1227.5M735.8 1223.3V1246.3"/><path stroke="#f23645" stroke-width="2.9" d="M734.1 1224.3V1225.8M735.8 1225.8V1232.9"/><path stroke="#089981" stroke-width="1.6" d="M737.5 1218.6V1244.0M739.1 1199.4V1227.4M740.8 1199.4V1220.1"/><path stroke="#089981" stroke-width="2.9" d="M737.5 1223.3V1232.9M739.1 1214.2V1223.3M740.8 1205.1V1214.2"/><path stroke="#f23645" stroke-width="1.6" d="M742.5 1189.3V1221.1"/><path stroke="#f23645" stroke-width="2.9" d="M742.5 1205.1V1215.7"/><path stroke="#089981" stroke-width="1.6" d="M744.1 1193.2V1221.1M745.8 1124.4V1201.1M747.5 1122.2V1163.9"/><path stroke="#089981" stroke-width="2.9" d="M744.1 1198.4V1215.7M745.8 1153.4V1198.4M747.5 1125.3V1153.4"/><path stroke="#f23645" stroke-width="1.6" d="M749.1 1122.2V1133.1M750.8 1122.2V1154.7"/><path stroke="#f23645" stroke-width="2.9" d="M749.1 1125.3V1131.9M750.8 1131.9V1147.2"/><path stroke="#089981" stroke-width="1.6" d="M752.5 1129.0V1164.7"/><path stroke="#089981" stroke-width="2.9" d="M752.5 1131.7V1147.2"/><path stroke="#f23645" stroke-width="1.6" d="M754.1 1129.0V1192.7M755.8 1156.0V1169.5M757.5 1138.5V1170.4M759.1 1166.2V1202.1"/><path stroke="#f23645" stroke-width="2.9" d="M754.1 1131.7V1157.3M755.8 1157.3V1167.4M757.5 1167.4V1168.4M759.1 1167.5V1183.1"/><path stroke="#089981" stroke-width="1.6" d="M760.8 1172.2V1186.9M762.5 1160.2V1181.2"/><path stroke="#089981" stroke-width="2.9" d="M760.8 1176.2V1183.1M762.5 1162.3V1176.2"/><path stroke="#f23645" stroke-width="1.6" d="M764.1 1146.6V1167.5"/><path stroke="#f23645" stroke-width="2.9" d="M764.1 1162.3V1166.8"/><path stroke="#089981" stroke-width="1.6" d="M765.8 1163.5V1172.6"/><path stroke="#089981" stroke-width="2.9" d="M765.8 1165.8V1166.8"/><path stroke="#f23645" stroke-width="1.6" d="M767.5 1164.0V1193.5"/><path stroke="#f23645" stroke-width="2.9" d="M767.5 1165.8V1168.1"/><path stroke="#089981" stroke-width="1.6" d="M769.1 1138.7V1169.7M770.8 1123.6V1142.6M772.5 1130.6V1137.2"/><path stroke="#089981" stroke-width="2.9" d="M769.1 1139.2V1168.1M770.8 1136.0V1139.2M772.5 1134.8V1136.0"/><path stroke="#f23645" stroke-width="1.6" d="M774.1 1136.0V1155.7M775.8 1150.3V1173.7"/><path stroke="#f23645" stroke-width="2.9" d="M774.1 1138.1V1152.1M775.8 1152.1V1161.5"/><path stroke="#089981" stroke-width="1.6" d="M777.5 1137.4V1173.7"/><path stroke="#089981" stroke-width="2.9" d="M777.5 1140.5V1161.5"/><path stroke="#f23645" stroke-width="1.6" d="M779.1 1136.0V1146.6M780.8 1142.6V1162.3"/><path stroke="#f23645" stroke-width="2.9" d="M779.1 1140.5V1143.7M780.8 1143.7V1153.2"/><path stroke="#089981" stroke-width="1.6" d="M782.5 1118.8V1154.3M784.1 1103.5V1128.4M785.8 1088.5V1114.1M787.5 1077.3V1102.2M789.1 1062.0V1083.5"/><path stroke="#089981" stroke-width="2.9" d="M782.5 1126.9V1153.2M784.1 1104.6V1126.9M785.8 1092.8V1104.6M787.5 1082.9V1092.8M789.1 1062.0V1082.9"/><path stroke="#f23645" stroke-width="1.6" d="M790.8 1049.9V1092.9"/><path stroke="#f23645" stroke-width="2.9" d="M790.8 1060.1V1073.3"/><path stroke="#089981" stroke-width="1.6" d="M792.5 1035.5V1076.6M794.1 1042.0V1051.3M795.8 1029.5V1057.4"/><path stroke="#089981" stroke-width="2.9" d="M792.5 1048.8V1073.3M794.1 1043.7V1048.8M795.8 1040.7V1043.7"/><path stroke="#f23645" stroke-width="1.6" d="M797.5 1035.0V1061.5M799.1 1054.5V1070.9M800.8 1066.8V1119.5"/><path stroke="#f23645" stroke-width="2.9" d="M797.5 1040.7V1058.4M799.1 1058.4V1067.6M800.8 1067.6V1085.0"/><path stroke="#089981" stroke-width="1.6" d="M802.5 1076.2V1118.1M804.1 1054.5V1086.7"/><path stroke="#089981" stroke-width="2.9" d="M802.5 1081.2V1085.0M804.1 1059.7V1081.2"/><path stroke="#f23645" stroke-width="1.6" d="M805.8 1057.6V1069.7M807.5 1065.8V1097.8M809.1 1083.1V1106.2M810.8 1085.6V1129.8"/><path stroke="#f23645" stroke-width="2.9" d="M805.8 1059.7V1068.9M807.5 1069.0V1085.6M809.1 1085.6V1093.5M810.8 1093.5V1104.0"/><path stroke="#089981" stroke-width="1.6" d="M812.5 1081.6V1115.4M814.1 1075.7V1097.0M815.8 1070.2V1081.4M817.5 1051.2V1073.5"/><path stroke="#089981" stroke-width="2.9" d="M812.5 1086.0V1104.0M814.1 1078.8V1086.0M815.8 1071.9V1078.8M817.5 1057.1V1071.9"/><path stroke="#f23645" stroke-width="1.6" d="M819.1 1054.8V1071.3M820.8 1056.8V1084.3M822.5 1069.2V1107.3M824.1 1070.6V1077.0"/><path stroke="#f23645" stroke-width="2.9" d="M819.1 1057.1V1060.5M820.8 1060.5V1071.0M822.5 1071.0V1073.2M824.1 1073.2V1075.5"/><path stroke="#089981" stroke-width="1.6" d="M825.8 1032.8V1077.6M827.4 1014.4V1053.3"/><path stroke="#089981" stroke-width="2.9" d="M825.8 1052.0V1075.5M827.4 1035.9V1052.0"/><path stroke="#f23645" stroke-width="1.6" d="M829.1 1030.7V1080.2M830.8 1051.9V1063.8"/><path stroke="#f23645" stroke-width="2.9" d="M829.1 1035.9V1055.6M830.8 1055.6V1062.9"/><path stroke="#089981" stroke-width="1.6" d="M832.4 1042.2V1078.3M834.1 1038.1V1045.6"/><path stroke="#089981" stroke-width="2.9" d="M832.4 1043.5V1062.9M834.1 1041.1V1043.5"/><path stroke="#f23645" stroke-width="1.6" d="M835.8 1019.2V1043.9M837.4 1039.3V1134.4"/><path stroke="#f23645" stroke-width="2.9" d="M835.8 1041.1V1042.1M837.4 1041.6V1078.1"/><path stroke="#089981" stroke-width="1.6" d="M839.1 1067.5V1081.9"/><path stroke="#089981" stroke-width="2.9" d="M839.1 1076.9V1078.1"/><path stroke="#f23645" stroke-width="1.6" d="M840.8 1074.8V1096.5"/><path stroke="#f23645" stroke-width="2.9" d="M840.8 1076.9V1082.3"/><path stroke="#089981" stroke-width="1.6" d="M842.4 1068.0V1085.9"/><path stroke="#089981" stroke-width="2.9" d="M842.4 1069.5V1082.3"/><path stroke="#f23645" stroke-width="1.6" d="M844.1 1051.7V1086.0M845.8 1078.0V1111.4"/><path stroke="#f23645" stroke-width="2.9" d="M844.1 1069.5V1084.2M845.8 1084.2V1086.2"/><path stroke="#089981" stroke-width="1.6" d="M847.4 1040.4V1088.1M849.1 929.3V1051.9M850.8 942.3V1006.8"/><path stroke="#089981" stroke-width="2.9" d="M847.4 1041.2V1086.2M849.1 984.3V1041.2M850.8 946.5V984.3"/><path stroke="#f23645" stroke-width="1.6" d="M852.4 919.8V1009.7M854.1 965.0V979.8M855.8 971.4V1007.0M857.4 975.3V990.4"/><path stroke="#f23645" stroke-width="2.9" d="M852.4 946.5V972.7M854.1 972.7V977.1M855.8 977.1V984.5M857.4 984.5V987.7"/><path stroke="#089981" stroke-width="1.6" d="M859.1 967.7V993.7M860.8 956.4V973.6"/><path stroke="#089981" stroke-width="2.9" d="M859.1 971.3V987.7M860.8 971.2V972.2"/><path stroke="#f23645" stroke-width="1.6" d="M862.4 963.7V1026.0M864.1 975.0V1000.5"/><path stroke="#f23645" stroke-width="2.9" d="M862.4 971.2V986.7M864.1 986.7V999.3"/><path stroke="#089981" stroke-width="1.6" d="M865.8 993.8V1004.2"/><path stroke="#089981" stroke-width="2.9" d="M865.8 998.3V999.3"/><path stroke="#f23645" stroke-width="1.6" d="M867.4 996.0V1014.5M869.1 1002.4V1065.3M870.8 1041.7V1112.7M872.4 1078.3V1090.7M874.1 1088.2V1110.8"/><path stroke="#f23645" stroke-width="2.9" d="M867.4 998.3V1005.6M869.1 1005.6V1046.7M870.8 1046.7V1081.3M872.4 1081.3V1089.7M874.1 1089.7V1097.0"/><path stroke="#089981" stroke-width="1.6" d="M875.8 1077.6V1103.4"/><path stroke="#089981" stroke-width="2.9" d="M875.8 1080.2V1097.0"/><path stroke="#f23645" stroke-width="1.6" d="M877.4 1079.1V1087.0"/><path stroke="#f23645" stroke-width="2.9" d="M877.4 1080.2V1087.0"/><path stroke="#089981" stroke-width="1.6" d="M879.1 1066.5V1087.0M880.8 1064.0V1069.6M882.4 1033.6V1066.7"/><path stroke="#089981" stroke-width="2.9" d="M879.1 1068.9V1087.0M880.8 1065.5V1068.9M882.4 1053.9V1065.5"/><path stroke="#f23645" stroke-width="1.6" d="M884.1 1048.2V1071.3"/><path stroke="#f23645" stroke-width="2.9" d="M884.1 1053.9V1066.9"/><path stroke="#089981" stroke-width="1.6" d="M885.8 1060.4V1087.0"/><path stroke="#089981" stroke-width="2.9" d="M885.8 1062.1V1066.9"/><path stroke="#f23645" stroke-width="1.6" d="M887.4 1052.8V1069.1"/><path stroke="#f23645" stroke-width="2.9" d="M887.4 1062.1V1063.2"/><path stroke="#089981" stroke-width="1.6" d="M889.1 1054.4V1071.7"/><path stroke="#089981" stroke-width="2.9" d="M889.1 1062.5V1063.5"/><path stroke="#f23645" stroke-width="1.6" d="M890.8 1061.4V1065.1M892.4 1062.7V1076.1"/><path stroke="#f23645" stroke-width="2.9" d="M890.8 1062.5V1063.5M892.4 1063.3V1070.0"/><path stroke="#089981" stroke-width="1.6" d="M894.1 1041.9V1072.4M895.8 1028.9V1050.1M897.4 1008.8V1026.0M899.1 990.6V1019.1M900.8 986.8V1004.0M902.4 984.9V1004.3M904.1 954.3V995.7M905.8 933.1V963.7M907.4 920.4V935.9M909.1 891.0V925.8M910.8 885.6V896.2M912.4 876.8V888.2M914.1 836.7V872.5M915.8 825.9V851.7M917.4 810.7V843.4M919.1 827.4V832.5M920.8 809.4V844.5"/><path stroke="#089981" stroke-width="2.9" d="M894.1 1047.1V1070.0M895.8 1031.9V1047.1M897.4 1016.0V1026.0M899.1 1002.2V1016.0M900.8 993.7V1002.2M902.4 986.3V993.7M904.1 964.3V986.3M905.8 933.8V963.7M907.4 922.1V933.8M909.1 894.7V922.1M910.8 886.3V893.3M912.4 884.3V886.3M914.1 849.2V868.8M915.8 835.0V849.2M917.4 832.0V835.0M919.1 831.1V832.1M920.8 815.9V831.1"/><path stroke="#f23645" stroke-width="1.6" d="M922.4 812.5V854.1"/><path stroke="#f23645" stroke-width="2.9" d="M922.4 815.9V835.9"/><path stroke="#089981" stroke-width="1.6" d="M924.1 805.0V844.0M925.7 796.7V824.0M927.4 752.8V810.7M929.1 743.3V771.4M930.7 652.2V747.3M932.4 640.0V708.8"/><path stroke="#089981" stroke-width="2.9" d="M924.1 821.2V835.9M925.7 797.6V821.2M927.4 754.2V797.6M929.1 746.0V754.2M930.7 702.5V746.0M932.4 674.8V702.5"/><path stroke="#f23645" stroke-width="1.6" d="M934.1 657.9V703.7"/><path stroke="#f23645" stroke-width="2.9" d="M934.1 674.8V690.2"/><path stroke="#089981" stroke-width="1.6" d="M935.7 664.7V691.8"/><path stroke="#089981" stroke-width="2.9" d="M935.7 669.0V690.2"/><path stroke="#f23645" stroke-width="1.6" d="M937.4 638.7V694.2"/><path stroke="#f23645" stroke-width="2.9" d="M937.4 669.0V680.1"/><path stroke="#089981" stroke-width="1.6" d="M939.1 592.8V692.1"/><path stroke="#089981" stroke-width="2.9" d="M939.1 619.3V680.1"/><path stroke="#f23645" stroke-width="1.6" d="M940.7 533.0V749.8"/><path stroke="#f23645" stroke-width="2.9" d="M940.7 619.3V625.0"/><path stroke="#089981" stroke-width="1.6" d="M942.4 526.7V630.9M944.1 504.5V548.6"/><path stroke="#089981" stroke-width="2.9" d="M942.4 536.1V625.0M944.1 505.6V536.1"/><path stroke="#f23645" stroke-width="1.6" d="M945.7 472.0V515.6M947.4 478.7V529.4"/><path stroke="#f23645" stroke-width="2.9" d="M945.7 505.6V508.2M947.4 508.2V527.4"/><path stroke="#089981" stroke-width="1.6" d="M949.1 488.8V543.8M950.7 441.4V565.5"/><path stroke="#089981" stroke-width="2.9" d="M949.1 506.7V527.4M950.7 478.9V506.7"/><path stroke="#f23645" stroke-width="1.6" d="M952.4 440.3V489.9M954.1 455.5V520.1M955.7 469.3V513.7M957.4 509.4V570.9M959.1 566.0V677.9"/><path stroke="#f23645" stroke-width="2.9" d="M952.4 478.9V481.7M954.1 481.7V510.1M955.7 510.1V511.1M957.4 510.5V570.9M959.1 572.1V633.6"/><path stroke="#089981" stroke-width="1.6" d="M960.7 585.8V635.7"/><path stroke="#089981" stroke-width="2.9" d="M960.7 616.2V633.6"/><path stroke="#f23645" stroke-width="1.6" d="M962.4 602.6V663.0"/><path stroke="#f23645" stroke-width="2.9" d="M962.4 616.2V663.0"/><path stroke="#089981" stroke-width="1.6" d="M964.1 655.0V673.3"/><path stroke="#089981" stroke-width="2.9" d="M964.1 658.4V669.8"/><path stroke="#f23645" stroke-width="1.6" d="M965.7 650.1V801.2"/><path stroke="#f23645" stroke-width="2.9" d="M965.7 658.4V682.3"/><path stroke="#089981" stroke-width="1.6" d="M967.4 617.0V687.0"/><path stroke="#089981" stroke-width="2.9" d="M967.4 641.6V682.3"/><path stroke="#f23645" stroke-width="1.6" d="M969.1 638.4V733.5"/><path stroke="#f23645" stroke-width="2.9" d="M969.1 641.6V674.8"/><path stroke="#089981" stroke-width="1.6" d="M970.7 666.6V725.4"/><path stroke="#089981" stroke-width="2.9" d="M970.7 668.3V674.8"/><path stroke="#f23645" stroke-width="1.6" d="M972.4 664.6V690.7"/><path stroke="#f23645" stroke-width="2.9" d="M972.4 668.3V676.8"/><path stroke="#089981" stroke-width="1.6" d="M974.1 591.2V688.7M975.7 585.0V639.1"/><path stroke="#089981" stroke-width="2.9" d="M974.1 629.2V676.8M975.7 602.8V629.2"/><path stroke="#f23645" stroke-width="1.6" d="M977.4 594.2V660.3"/><path stroke="#f23645" stroke-width="2.9" d="M977.4 602.8V615.9"/><path stroke="#089981" stroke-width="1.6" d="M979.1 608.8V632.2"/><path stroke="#089981" stroke-width="2.9" d="M979.1 608.8V615.9"/><path stroke="#f23645" stroke-width="1.6" d="M980.7 602.6V656.3"/><path stroke="#f23645" stroke-width="2.9" d="M980.7 607.2V649.0"/><path stroke="#089981" stroke-width="1.6" d="M982.4 616.6V651.4M984.1 593.4V623.7"/><path stroke="#089981" stroke-width="2.9" d="M982.4 620.8V649.0M984.1 607.5V620.8"/><path stroke="#f23645" stroke-width="1.6" d="M985.7 605.2V676.6M987.4 629.8V747.0M989.1 665.0V749.8M990.7 665.8V691.1"/><path stroke="#f23645" stroke-width="2.9" d="M985.7 607.5V635.9M987.4 635.9V669.0M989.1 669.0V687.0M990.7 687.0V688.8"/><path stroke="#089981" stroke-width="1.6" d="M992.4 681.6V713.2"/><path stroke="#089981" stroke-width="2.9" d="M992.4 682.8V688.8"/><path stroke="#f23645" stroke-width="1.6" d="M994.1 651.2V703.3"/><path stroke="#f23645" stroke-width="2.9" d="M994.1 682.8V687.0"/><path stroke="#089981" stroke-width="1.6" d="M995.7 668.2V702.7M997.4 568.2V680.1M999.1 568.7V623.1"/><path stroke="#089981" stroke-width="2.9" d="M995.7 669.8V687.0M997.4 615.1V669.8M999.1 605.2V615.1"/><path stroke="#f23645" stroke-width="1.6" d="M1000.7 598.0V676.6M1002.4 606.1V640.5M1004.1 609.3V790.4M1005.7 686.3V797.7M1007.4 763.3V792.5"/><path stroke="#f23645" stroke-width="2.9" d="M1000.7 605.2V631.8M1002.4 631.8V639.9M1004.1 639.9V698.0M1005.7 698.0V774.4M1007.4 774.4V789.1"/><path stroke="#089981" stroke-width="1.6" d="M1009.1 724.0V791.2"/><path stroke="#089981" stroke-width="2.9" d="M1009.1 768.1V789.1"/><path stroke="#f23645" stroke-width="1.6" d="M1010.7 767.4V808.0M1012.4 774.8V850.0"/><path stroke="#f23645" stroke-width="2.9" d="M1010.7 768.1V793.1M1012.4 793.1V800.6"/><path stroke="#089981" stroke-width="1.6" d="M1014.1 787.3V808.8"/><path stroke="#089981" stroke-width="2.9" d="M1014.1 789.3V800.6"/><path stroke="#f23645" stroke-width="1.6" d="M1015.7 776.3V869.0"/><path stroke="#f23645" stroke-width="2.9" d="M1015.7 789.3V800.0"/><path stroke="#089981" stroke-width="1.6" d="M1017.4 781.0V809.7M1019.1 760.6V791.0M1020.7 729.4V774.1"/><path stroke="#089981" stroke-width="2.9" d="M1017.4 782.6V800.0M1019.1 772.4V782.6M1020.7 758.1V772.4"/><path stroke="#f23645" stroke-width="1.6" d="M1022.4 746.8V762.3"/><path stroke="#f23645" stroke-width="2.9" d="M1022.4 758.1V759.5"/><path stroke="#089981" stroke-width="1.6" d="M1024.0 719.4V765.8"/><path stroke="#089981" stroke-width="2.9" d="M1024.0 731.0V759.5"/><path stroke="#f23645" stroke-width="1.6" d="M1025.7 726.4V794.5M1027.4 759.6V797.2"/><path stroke="#f23645" stroke-width="2.9" d="M1025.7 731.0V762.5M1027.4 762.5V795.8"/><path stroke="#089981" stroke-width="1.6" d="M1029.0 721.2V797.2M1030.7 698.3V740.2"/><path stroke="#089981" stroke-width="2.9" d="M1029.0 729.0V795.8M1030.7 717.5V729.0"/><path stroke="#f23645" stroke-width="1.6" d="M1032.4 698.3V757.6M1034.0 726.7V781.6M1035.7 773.2V885.2"/><path stroke="#f23645" stroke-width="2.9" d="M1032.4 717.5V733.1M1034.0 733.1V775.2M1035.7 775.2V826.0"/><path stroke="#089981" stroke-width="1.6" d="M1037.4 799.4V827.2M1039.0 786.9V836.5M1040.7 772.3V819.0M1042.4 774.3V778.2M1044.0 744.3V777.4"/><path stroke="#089981" stroke-width="2.9" d="M1037.4 807.6V826.0M1039.0 797.0V807.6M1040.7 777.4V797.0M1042.4 775.5V777.4M1044.0 757.7V775.5"/><path stroke="#f23645" stroke-width="1.6" d="M1045.7 751.0V829.7M1047.4 789.7V821.3"/><path stroke="#f23645" stroke-width="2.9" d="M1045.7 757.7V797.5M1047.4 797.5V812.1"/><path stroke="#089981" stroke-width="1.6" d="M1049.0 803.3V815.1"/><path stroke="#089981" stroke-width="2.9" d="M1049.0 810.8V812.1"/><path stroke="#f23645" stroke-width="1.6" d="M1050.7 809.4V851.4M1052.4 820.9V863.6"/><path stroke="#f23645" stroke-width="2.9" d="M1050.7 811.6V824.4M1052.4 824.4V842.9"/><path stroke="#089981" stroke-width="1.6" d="M1054.0 831.1V846.2"/><path stroke="#089981" stroke-width="2.9" d="M1054.0 833.7V842.9"/><path stroke="#f23645" stroke-width="1.6" d="M1055.7 831.3V869.0M1057.4 823.2V847.1"/><path stroke="#f23645" stroke-width="2.9" d="M1055.7 833.7V844.1M1057.4 844.1V845.1"/><path stroke="#089981" stroke-width="1.6" d="M1059.0 806.7V851.8"/><path stroke="#089981" stroke-width="2.9" d="M1059.0 825.9V845.1"/><path stroke="#f23645" stroke-width="1.6" d="M1060.7 816.6V846.0"/><path stroke="#f23645" stroke-width="2.9" d="M1060.7 825.9V826.9"/><path stroke="#089981" stroke-width="1.6" d="M1062.4 800.8V827.4M1064.0 771.4V810.8"/><path stroke="#089981" stroke-width="2.9" d="M1062.4 803.6V826.0M1064.0 771.4V803.6"/><path stroke="#f23645" stroke-width="1.6" d="M1065.7 734.9V804.0"/><path stroke="#f23645" stroke-width="2.9" d="M1065.7 766.4V784.9"/><path stroke="#089981" stroke-width="1.6" d="M1067.4 530.3V804.0M1069.0 547.0V658.2M1070.7 539.7V580.2"/><path stroke="#089981" stroke-width="2.9" d="M1067.4 646.7V784.9M1069.0 579.0V646.7M1070.7 570.6V579.0"/><path stroke="#f23645" stroke-width="1.6" d="M1072.4 494.2V635.9"/><path stroke="#f23645" stroke-width="2.9" d="M1072.4 570.6V575.6"/><path stroke="#089981" stroke-width="1.6" d="M1074.0 536.2V600.7"/><path stroke="#089981" stroke-width="2.9" d="M1074.0 540.7V575.6"/><path stroke="#f23645" stroke-width="1.6" d="M1075.7 508.4V552.8"/><path stroke="#f23645" stroke-width="2.9" d="M1075.7 540.7V544.7"/><path stroke="#089981" stroke-width="1.6" d="M1077.4 530.5V547.5M1079.0 482.0V547.7"/><path stroke="#089981" stroke-width="2.9" d="M1077.4 537.6V544.7M1079.0 510.4V537.6"/><path stroke="#f23645" stroke-width="1.6" d="M1080.7 499.1V527.2M1082.4 520.8V564.1M1084.0 542.0V576.3"/><path stroke="#f23645" stroke-width="2.9" d="M1080.7 510.4V525.9M1082.4 525.9V542.9M1084.0 542.9V556.8"/><path stroke="#089981" stroke-width="1.6" d="M1085.7 541.9V560.4"/><path stroke="#089981" stroke-width="2.9" d="M1085.7 544.0V556.8"/><path stroke="#f23645" stroke-width="1.6" d="M1087.4 527.6V569.6"/><path stroke="#f23645" stroke-width="2.9" d="M1087.4 544.0V545.6"/><path stroke="#089981" stroke-width="1.6" d="M1089.0 536.0V548.4M1090.7 526.2V541.7"/><path stroke="#089981" stroke-width="2.9" d="M1089.0 540.3V545.6M1090.7 540.0V541.0"/><path stroke="#f23645" stroke-width="1.6" d="M1092.4 531.5V566.8"/><path stroke="#f23645" stroke-width="2.9" d="M1092.4 540.0V545.2"/><path stroke="#089981" stroke-width="1.6" d="M1094.0 511.8V553.6"/><path stroke="#089981" stroke-width="2.9" d="M1094.0 523.9V545.2"/><path stroke="#f23645" stroke-width="1.6" d="M1095.7 515.4V537.9M1097.4 532.6V617.0M1099.0 562.3V575.2M1100.7 570.9V593.8"/><path stroke="#f23645" stroke-width="2.9" d="M1095.7 523.9V537.0M1097.4 537.0V566.3M1099.0 566.3V570.6M1100.7 570.9V588.5"/><path stroke="#089981" stroke-width="1.6" d="M1102.4 570.9V593.1"/><path stroke="#089981" stroke-width="2.9" d="M1102.4 585.3V588.5"/><path stroke="#f23645" stroke-width="1.6" d="M1104.0 579.7V606.6M1105.7 602.0V671.2M1107.4 624.1V672.5M1109.0 629.1V694.2"/><path stroke="#f23645" stroke-width="2.9" d="M1104.0 585.3V605.6M1105.7 605.6V627.6M1107.4 627.6V633.3M1109.0 633.3V642.4"/><path stroke="#089981" stroke-width="1.6" d="M1110.7 625.6V643.6M1112.4 595.3V640.8"/><path stroke="#089981" stroke-width="2.9" d="M1110.7 633.5V642.4M1112.4 614.4V633.5"/><path stroke="#f23645" stroke-width="1.6" d="M1114.0 613.4V638.6M1115.7 625.7V698.3"/><path stroke="#f23645" stroke-width="2.9" d="M1114.0 614.4V628.8M1115.7 628.8V634.0"/><path stroke="#089981" stroke-width="1.6" d="M1117.4 612.7V638.3"/><path stroke="#089981" stroke-width="2.9" d="M1117.4 625.8V634.0"/><path stroke="#f23645" stroke-width="1.6" d="M1119.0 604.8V631.5M1120.7 623.3V665.8"/><path stroke="#f23645" stroke-width="2.9" d="M1119.0 625.8V630.3M1120.7 630.3V655.9"/><path stroke="#089981" stroke-width="1.6" d="M1122.3 653.0V658.4"/><path stroke="#089981" stroke-width="2.9" d="M1122.3 654.6V655.9"/><path stroke="#f23645" stroke-width="1.6" d="M1124.0 654.1V673.2M1125.7 667.5V740.3"/><path stroke="#f23645" stroke-width="2.9" d="M1124.0 654.6V669.0M1125.7 669.0V698.0"/><path stroke="#089981" stroke-width="1.6" d="M1127.3 677.8V706.4M1129.0 666.8V688.6M1130.7 656.3V682.1M1132.3 653.6V691.1"/><path stroke="#089981" stroke-width="2.9" d="M1127.3 683.6V698.0M1129.0 677.4V683.6M1130.7 676.2V677.4M1132.3 673.1V676.2"/><path stroke="#f23645" stroke-width="1.6" d="M1134.0 671.1V694.2"/><path stroke="#f23645" stroke-width="2.9" d="M1134.0 673.1V674.1"/><path stroke="#089981" stroke-width="1.6" d="M1135.7 660.6V685.6M1137.3 642.7V679.3"/><path stroke="#089981" stroke-width="2.9" d="M1135.7 664.4V673.7M1137.3 664.2V665.2"/><path stroke="#f23645" stroke-width="1.6" d="M1139.0 662.5V680.4M1140.7 663.6V719.6M1142.3 683.1V886.6M1144.0 752.7V804.0M1145.7 794.8V843.2"/><path stroke="#f23645" stroke-width="2.9" d="M1139.0 664.2V675.8M1140.7 675.8V695.1M1142.3 695.1V761.4M1144.0 761.4V802.6M1145.7 802.6V827.7"/><path stroke="#089981" stroke-width="1.6" d="M1147.3 810.5V881.2M1149.0 781.1V815.6M1150.7 779.2V799.8"/><path stroke="#089981" stroke-width="2.9" d="M1147.3 812.1V827.7M1149.0 793.0V812.1M1150.7 782.0V793.0"/><path stroke="#f23645" stroke-width="1.6" d="M1152.3 764.7V794.7"/><path stroke="#f23645" stroke-width="2.9" d="M1152.3 782.0V786.1"/><path stroke="#089981" stroke-width="1.6" d="M1154.0 747.0V786.8"/><path stroke="#089981" stroke-width="2.9" d="M1154.0 775.9V786.1"/><path stroke="#f23645" stroke-width="1.6" d="M1155.7 774.5V802.6"/><path stroke="#f23645" stroke-width="2.9" d="M1155.7 775.9V777.0"/><path stroke="#089981" stroke-width="1.6" d="M1157.3 763.2V783.5M1159.0 721.2V773.9M1160.7 649.5V725.6M1162.3 655.1V698.3M1164.0 642.7V681.5M1165.7 633.5V691.5M1167.3 633.2V657.3M1169.0 638.5V664.4M1170.7 625.6V676.6"/><path stroke="#089981" stroke-width="2.9" d="M1157.3 765.3V777.0M1159.0 724.1V765.3M1160.7 679.6V724.1M1162.3 669.7V679.6M1164.0 667.8V669.7M1165.7 655.5V667.8M1167.3 648.2V655.5M1169.0 644.3V648.2M1170.7 635.9V644.3"/><path stroke="#f23645" stroke-width="1.6" d="M1172.3 625.6V647.4M1174.0 631.9V650.1M1175.7 641.6V790.4M1177.3 683.5V715.2M1179.0 704.5V760.6M1180.7 707.8V732.9M1182.3 725.8V757.1"/><path stroke="#f23645" stroke-width="2.9" d="M1172.3 635.9V637.3M1174.0 637.3V646.4M1175.7 646.4V696.9M1177.3 696.9V711.2M1179.0 711.2V722.4M1180.7 722.4V728.9M1182.3 728.9V733.4"/><path stroke="#089981" stroke-width="1.6" d="M1184.0 683.9V734.4"/><path stroke="#089981" stroke-width="2.9" d="M1184.0 695.7V733.4"/><path stroke="#f23645" stroke-width="1.6" d="M1185.7 692.8V733.1"/><path stroke="#f23645" stroke-width="2.9" d="M1185.7 695.7V726.7"/><path stroke="#089981" stroke-width="1.6" d="M1187.3 717.8V738.5"/><path stroke="#089981" stroke-width="2.9" d="M1187.3 726.6V727.6"/><path stroke="#f23645" stroke-width="1.6" d="M1189.0 719.6V745.8M1190.7 738.9V813.0M1192.3 794.3V820.6M1194.0 811.1V895.1M1195.7 856.9V1130.1M1197.3 959.8V1061.5"/><path stroke="#f23645" stroke-width="2.9" d="M1189.0 726.6V739.5M1190.7 739.5V800.6M1192.3 800.6V819.8M1194.0 819.8V858.1M1195.7 858.1V974.9M1197.3 974.9V1013.0"/><path stroke="#089981" stroke-width="1.6" d="M1199.0 972.8V1022.4M1200.7 917.9V1057.4M1202.3 925.0V991.1"/><path stroke="#089981" stroke-width="2.9" d="M1199.0 977.4V1013.0M1200.7 960.2V977.4M1202.3 933.8V960.2"/><path stroke="#f23645" stroke-width="1.6" d="M1204.0 908.4V980.2"/><path stroke="#f23645" stroke-width="2.9" d="M1204.0 933.8V950.1"/><path stroke="#089981" stroke-width="1.6" d="M1205.7 935.5V960.4M1207.3 908.4V991.0"/><path stroke="#089981" stroke-width="2.9" d="M1205.7 941.5V950.1M1207.3 918.1V941.5"/><path stroke="#f23645" stroke-width="1.6" d="M1209.0 911.9V951.2"/><path stroke="#f23645" stroke-width="2.9" d="M1209.0 918.1V945.0"/><path stroke="#089981" stroke-width="1.6" d="M1210.7 898.9V947.2"/><path stroke="#089981" stroke-width="2.9" d="M1210.7 911.9V945.0"/><path stroke="#f23645" stroke-width="1.6" d="M1212.3 903.3V989.7M1214.0 934.4V963.4M1215.7 954.1V977.5"/><path stroke="#f23645" stroke-width="2.9" d="M1212.3 911.9V949.6M1214.0 949.6V956.8M1215.7 956.8V969.2"/><path stroke="#089981" stroke-width="1.6" d="M1217.3 930.1V974.2M1219.0 927.4V938.7"/><path stroke="#089981" stroke-width="2.9" d="M1217.3 935.5V969.2M1219.0 932.7V935.5"/><path stroke="#f23645" stroke-width="1.6" d="M1220.6 927.4V951.5M1222.3 946.7V982.9"/><path stroke="#f23645" stroke-width="2.9" d="M1220.6 932.7V947.7M1222.3 947.7V966.8"/><path stroke="#089981" stroke-width="1.6" d="M1224.0 950.9V965.3M1225.6 889.4V957.9M1227.3 884.5V937.9"/><path stroke="#089981" stroke-width="2.9" d="M1224.0 954.2V965.3M1225.6 935.5V954.2M1227.3 899.5V935.5"/><path stroke="#f23645" stroke-width="1.6" d="M1229.0 896.0V905.6M1230.6 903.5V943.9M1232.3 925.1V1031.7M1234.0 963.0V999.1"/><path stroke="#f23645" stroke-width="2.9" d="M1229.0 899.5V904.1M1230.6 904.1V929.5M1232.3 929.5V969.0M1234.0 969.0V996.2"/><path stroke="#089981" stroke-width="1.6" d="M1235.6 962.0V997.1"/><path stroke="#089981" stroke-width="2.9" d="M1235.6 973.3V996.2"/><path stroke="#f23645" stroke-width="1.6" d="M1237.3 970.5V1019.5"/><path stroke="#f23645" stroke-width="2.9" d="M1237.3 973.3V990.6"/><path stroke="#089981" stroke-width="1.6" d="M1239.0 973.4V996.9"/><path stroke="#089981" stroke-width="2.9" d="M1239.0 973.4V990.6"/><path stroke="#f23645" stroke-width="1.6" d="M1240.6 973.4V1030.3"/><path stroke="#f23645" stroke-width="2.9" d="M1240.6 973.4V999.7"/><path stroke="#089981" stroke-width="1.6" d="M1242.3 973.4V1005.2"/><path stroke="#089981" stroke-width="2.9" d="M1242.3 982.1V999.7"/><path stroke="#f23645" stroke-width="1.6" d="M1244.0 981.1V1005.9M1245.6 999.3V1062.3M1247.3 1028.5V1050.0M1249.0 1038.8V1116.5"/><path stroke="#f23645" stroke-width="2.9" d="M1244.0 982.1V1004.4M1245.6 1004.4V1031.2M1247.3 1031.2V1042.0M1249.0 1042.0V1069.5"/><path stroke="#089981" stroke-width="1.6" d="M1250.6 1064.4V1091.3M1252.3 1036.8V1067.5M1254.0 1039.0V1072.3"/><path stroke="#089981" stroke-width="2.9" d="M1250.6 1065.3V1069.5M1252.3 1044.4V1065.3M1254.0 1041.0V1044.4"/><path stroke="#f23645" stroke-width="1.6" d="M1255.6 1031.7V1046.3"/><path stroke="#f23645" stroke-width="2.9" d="M1255.6 1041.0V1044.1"/><path stroke="#089981" stroke-width="1.6" d="M1257.3 1038.1V1045.7M1259.0 1039.2V1060.1M1260.6 1008.7V1051.9"/><path stroke="#089981" stroke-width="2.9" d="M1257.3 1043.9V1044.9M1259.0 1041.8V1043.9M1260.6 1023.7V1041.8"/><path stroke="#f23645" stroke-width="1.6" d="M1262.3 1017.8V1029.2M1264.0 1019.6V1049.6M1265.6 1027.4V1080.5M1267.3 1045.4V1076.4"/><path stroke="#f23645" stroke-width="2.9" d="M1262.3 1023.7V1027.6M1264.0 1027.6V1033.6M1265.6 1033.6V1056.4M1267.3 1056.4V1061.4"/><path stroke="#089981" stroke-width="1.6" d="M1269.0 1033.0V1062.9M1270.6 1003.9V1042.5M1272.3 984.0V1012.8M1274.0 955.1V999.8M1275.6 941.2V979.6"/><path stroke="#089981" stroke-width="2.9" d="M1269.0 1037.1V1061.4M1270.6 1005.7V1037.1M1272.3 997.8V1005.7M1274.0 971.5V997.8M1275.6 943.8V971.5"/><path stroke="#f23645" stroke-width="1.6" d="M1277.3 925.2V950.9M1279.0 941.0V977.5"/><path stroke="#f23645" stroke-width="2.9" d="M1277.3 943.8V947.5M1279.0 947.5V951.4"/><path stroke="#089981" stroke-width="1.6" d="M1280.6 929.4V954.7"/><path stroke="#089981" stroke-width="2.9" d="M1280.6 930.2V951.4"/><path stroke="#f23645" stroke-width="1.6" d="M1282.3 927.4V953.0"/><path stroke="#f23645" stroke-width="2.9" d="M1282.3 930.2V946.3"/><path stroke="#089981" stroke-width="1.6" d="M1284.0 916.5V951.0"/><path stroke="#089981" stroke-width="2.9" d="M1284.0 939.2V946.3"/><path stroke="#f23645" stroke-width="1.6" d="M1285.6 933.2V951.8"/><path stroke="#f23645" stroke-width="2.9" d="M1285.6 939.2V949.5"/><path stroke="#089981" stroke-width="1.6" d="M1287.3 925.2V950.1"/><path stroke="#089981" stroke-width="2.9" d="M1287.3 939.7V949.5"/><path stroke="#f23645" stroke-width="1.6" d="M1289.0 925.2V950.9M1290.6 935.7V965.1M1292.3 958.4V1046.6M1294.0 1029.9V1062.3"/><path stroke="#f23645" stroke-width="2.9" d="M1289.0 939.7V945.7M1290.6 945.7V964.3M1292.3 964.3V1032.8M1294.0 1032.8V1042.2"/><path stroke="#089981" stroke-width="1.6" d="M1295.6 1022.0V1043.6M1297.3 1011.9V1024.5"/><path stroke="#089981" stroke-width="2.9" d="M1295.6 1023.5V1042.2M1297.3 1023.2V1024.2"/><path stroke="#f23645" stroke-width="1.6" d="M1299.0 1013.0V1035.8"/><path stroke="#f23645" stroke-width="2.9" d="M1299.0 1023.2V1024.2"/><path stroke="#089981" stroke-width="1.6" d="M1300.6 988.9V1028.7M1302.3 1007.4V1020.0"/><path stroke="#089981" stroke-width="2.9" d="M1300.6 1015.2V1023.7M1302.3 1011.1V1015.2"/><path stroke="#f23645" stroke-width="1.6" d="M1304.0 1006.4V1054.7"/><path stroke="#f23645" stroke-width="2.9" d="M1304.0 1011.1V1024.7"/><path stroke="#089981" stroke-width="1.6" d="M1305.6 1007.2V1026.4M1307.3 1007.5V1019.4"/><path stroke="#089981" stroke-width="2.9" d="M1305.6 1013.2V1024.7M1307.3 1012.9V1013.9"/><path stroke="#f23645" stroke-width="1.6" d="M1309.0 1000.5V1015.8"/><path stroke="#f23645" stroke-width="2.9" d="M1309.0 1012.9V1013.9"/><path stroke="#089981" stroke-width="1.6" d="M1310.6 1005.0V1017.0M1312.3 974.5V1012.2M1313.9 931.4V989.9"/><path stroke="#089981" stroke-width="2.9" d="M1310.6 1011.6V1013.8M1312.3 977.8V1009.6M1313.9 948.5V977.8"/><path stroke="#f23645" stroke-width="1.6" d="M1315.6 947.2V961.9"/><path stroke="#f23645" stroke-width="2.9" d="M1315.6 948.5V961.4"/><path stroke="#089981" stroke-width="1.6" d="M1317.3 947.1V969.4M1318.9 941.2V954.5M1320.6 931.4V952.8M1322.3 905.7V948.1"/><path stroke="#089981" stroke-width="2.9" d="M1317.3 951.3V961.4M1318.9 950.7V951.7M1320.6 947.1V950.7M1322.3 921.1V947.1"/><path stroke="#f23645" stroke-width="1.6" d="M1323.9 902.4V931.5M1325.6 929.5V1012.7M1327.3 943.9V976.9M1328.9 958.7V989.5M1330.6 984.7V1037.1M1332.3 987.6V1020.8"/><path stroke="#f23645" stroke-width="2.9" d="M1323.9 921.1V930.3M1325.6 930.3V949.1M1327.3 949.1V975.3M1328.9 975.3V986.3M1330.6 986.3V997.2M1332.3 997.2V1006.8"/><path stroke="#089981" stroke-width="1.6" d="M1333.9 1004.0V1007.5M1335.6 957.6V998.1M1337.3 930.6V971.7M1338.9 919.2V949.3"/><path stroke="#089981" stroke-width="2.9" d="M1333.9 1005.8V1006.8M1335.6 967.3V994.6M1337.3 946.6V967.3M1338.9 942.9V946.6"/><path stroke="#f23645" stroke-width="1.6" d="M1340.6 931.3V971.1M1342.3 962.0V1021.2M1343.9 995.9V1020.7"/><path stroke="#f23645" stroke-width="2.9" d="M1340.6 942.9V966.4M1342.3 966.4V997.6M1343.9 997.6V1005.9"/><path stroke="#089981" stroke-width="1.6" d="M1345.6 999.9V1026.3"/><path stroke="#089981" stroke-width="2.9" d="M1345.6 1001.2V1005.9"/><path stroke="#f23645" stroke-width="1.6" d="M1347.3 994.2V1045.2"/><path stroke="#f23645" stroke-width="2.9" d="M1347.3 1001.2V1018.8"/><path stroke="#089981" stroke-width="1.6" d="M1348.9 988.4V1037.1M1350.6 957.2V1020.5M1352.3 814.8V976.7M1353.9 821.1V853.5M1355.6 795.8V833.1M1357.3 684.7V804.0M1358.9 713.5V760.2M1360.6 665.8V766.5"/><path stroke="#089981" stroke-width="2.9" d="M1348.9 989.7V1018.8M1350.6 964.0V989.7M1352.3 849.2V964.0M1353.9 825.0V849.2M1355.6 800.4V825.0M1357.3 745.5V800.4M1358.9 733.7V745.5M1360.6 725.2V733.7"/><path stroke="#f23645" stroke-width="1.6" d="M1362.3 722.5V752.8M1363.9 703.7V797.7M1365.6 762.8V816.1"/><path stroke="#f23645" stroke-width="2.9" d="M1362.3 725.2V745.0M1363.9 745.0V781.5M1365.6 781.5V807.7"/><path stroke="#089981" stroke-width="1.6" d="M1367.3 747.0V816.1"/><path stroke="#089981" stroke-width="2.9" d="M1367.3 776.7V807.7"/><path stroke="#f23645" stroke-width="1.6" d="M1368.9 773.8V808.0M1370.6 743.0V804.1"/><path stroke="#f23645" stroke-width="2.9" d="M1368.9 776.7V781.9M1370.6 781.9V787.4"/><path stroke="#089981" stroke-width="1.6" d="M1372.3 777.0V796.0"/><path stroke="#089981" stroke-width="2.9" d="M1372.3 778.8V787.4"/><path stroke="#f23645" stroke-width="1.6" d="M1373.9 772.6V784.5"/><path stroke="#f23645" stroke-width="2.9" d="M1373.9 778.8V780.2"/><path stroke="#089981" stroke-width="1.6" d="M1375.6 686.1V818.9M1377.3 672.5V769.8M1378.9 646.8V729.4"/><path stroke="#089981" stroke-width="2.9" d="M1375.6 753.1V780.2M1377.3 724.0V753.1M1378.9 673.3V724.0"/><path stroke="#f23645" stroke-width="1.6" d="M1380.6 656.2V721.3"/><path stroke="#f23645" stroke-width="2.9" d="M1380.6 673.3V692.8"/><path stroke="#089981" stroke-width="1.6" d="M1382.3 631.9V716.6"/><path stroke="#089981" stroke-width="2.9" d="M1382.3 680.5V692.8"/><path stroke="#f23645" stroke-width="1.6" d="M1383.9 677.1V732.1"/><path stroke="#f23645" stroke-width="2.9" d="M1383.9 680.5V692.0"/><path stroke="#089981" stroke-width="1.6" d="M1385.6 581.7V711.7M1387.3 588.5V665.0M1388.9 593.6V627.9M1390.6 562.0V597.9"/><path stroke="#089981" stroke-width="2.9" d="M1385.6 645.6V692.0M1387.3 615.6V645.6M1388.9 595.6V615.6M1390.6 593.9V595.6"/><path stroke="#f23645" stroke-width="1.6" d="M1392.3 582.5V610.0"/><path stroke="#f23645" stroke-width="2.9" d="M1392.3 593.9V608.6"/><path stroke="#089981" stroke-width="1.6" d="M1393.9 556.8V627.8"/><path stroke="#089981" stroke-width="2.9" d="M1393.9 579.9V608.6"/><path stroke="#f23645" stroke-width="1.6" d="M1395.6 567.6V646.8"/><path stroke="#f23645" stroke-width="2.9" d="M1395.6 579.9V606.8"/><path stroke="#089981" stroke-width="1.6" d="M1397.3 508.6V607.6M1398.9 487.4V583.4M1400.6 439.5V505.2M1402.3 462.5V494.0"/><path stroke="#089981" stroke-width="2.9" d="M1397.3 567.7V606.8M1398.9 504.3V567.7M1400.6 490.7V504.3M1402.3 485.4V490.7"/><path stroke="#f23645" stroke-width="1.6" d="M1403.9 478.9V546.5"/><path stroke="#f23645" stroke-width="2.9" d="M1403.9 485.4V534.7"/><path stroke="#089981" stroke-width="1.6" d="M1405.6 470.6V650.8"/><path stroke="#089981" stroke-width="2.9" d="M1405.6 531.0V534.7"/><path stroke="#f23645" stroke-width="1.6" d="M1407.3 527.2V642.7"/><path stroke="#f23645" stroke-width="2.9" d="M1407.3 531.0V554.8"/><path stroke="#089981" stroke-width="1.6" d="M1408.9 541.6V623.8M1410.6 476.6V548.5M1412.2 484.2V524.5"/><path stroke="#089981" stroke-width="2.9" d="M1408.9 543.1V554.8M1410.6 511.2V543.1M1412.2 497.6V511.2"/><path stroke="#f23645" stroke-width="1.6" d="M1413.9 495.3V534.3M1415.6 481.5V513.5"/><path stroke="#f23645" stroke-width="2.9" d="M1413.9 497.6V510.4M1415.6 510.4V511.6"/><path stroke="#089981" stroke-width="1.6" d="M1417.2 435.4V519.9"/><path stroke="#089981" stroke-width="2.9" d="M1417.2 500.9V511.6"/><path stroke="#f23645" stroke-width="1.6" d="M1418.9 458.5V536.8M1420.6 528.1V579.1M1422.2 523.6V707.8M1423.9 616.4V787.7M1425.6 629.2V704.5"/><path stroke="#f23645" stroke-width="2.9" d="M1418.9 500.9V531.3M1420.6 531.3V548.1M1422.2 548.1V620.6M1423.9 620.6V652.5M1425.6 652.5V703.2"/><path stroke="#089981" stroke-width="1.6" d="M1427.2 684.6V745.7M1428.9 634.6V694.6M1430.6 633.2V674.7M1432.2 643.1V664.7"/><path stroke="#089981" stroke-width="2.9" d="M1427.2 685.6V703.2M1428.9 674.2V685.6M1430.6 657.1V674.2M1432.2 651.4V657.1"/><path stroke="#f23645" stroke-width="1.6" d="M1433.9 644.1V686.3M1435.6 675.9V715.9"/><path stroke="#f23645" stroke-width="2.9" d="M1433.9 651.4V682.1M1435.6 682.1V687.3"/><path stroke="#089981" stroke-width="1.6" d="M1437.2 669.8V694.7"/><path stroke="#089981" stroke-width="2.9" d="M1437.2 677.9V687.3"/><path stroke="#f23645" stroke-width="1.6" d="M1438.9 674.4V711.8M1440.6 692.0V713.2"/><path stroke="#f23645" stroke-width="2.9" d="M1438.9 677.9V695.4M1440.6 695.4V701.6"/><path stroke="#089981" stroke-width="1.6" d="M1442.2 667.1V704.5"/><path stroke="#089981" stroke-width="2.9" d="M1442.2 671.3V701.6"/><path stroke="#f23645" stroke-width="1.6" d="M1443.9 667.7V691.6"/><path stroke="#f23645" stroke-width="2.9" d="M1443.9 671.3V690.2"/><path stroke="#089981" stroke-width="1.6" d="M1445.6 650.2V690.7M1447.2 633.8V693.3M1448.9 589.9V650.8"/><path stroke="#089981" stroke-width="2.9" d="M1445.6 671.0V690.2M1447.2 642.2V671.0M1448.9 610.0V642.2"/><path stroke="#f23645" stroke-width="1.6" d="M1450.6 585.8V613.4"/><path stroke="#f23645" stroke-width="2.9" d="M1450.6 610.0V611.0"/><path stroke="#089981" stroke-width="1.6" d="M1452.2 562.2V612.0"/><path stroke="#089981" stroke-width="2.9" d="M1452.2 594.8V610.5"/><path stroke="#f23645" stroke-width="1.6" d="M1453.9 577.7V659.5M1455.6 619.3V683.1M1457.2 669.3V766.0"/><path stroke="#f23645" stroke-width="2.9" d="M1453.9 594.8V644.0M1455.6 644.0V682.1M1457.2 682.1V725.2"/><path stroke="#089981" stroke-width="1.6" d="M1458.9 708.6V751.1"/><path stroke="#089981" stroke-width="2.9" d="M1458.9 719.0V725.2"/><path stroke="#f23645" stroke-width="1.6" d="M1460.6 710.5V751.9M1462.2 703.7V754.8M1463.9 718.1V848.7"/><path stroke="#f23645" stroke-width="2.9" d="M1460.6 719.0V721.8M1462.2 721.8V739.0M1463.9 739.0V758.7"/><path stroke="#089981" stroke-width="1.6" d="M1465.6 717.5V776.9M1467.2 656.3V734.8"/><path stroke="#089981" stroke-width="2.9" d="M1465.6 726.0V758.7M1467.2 678.4V726.0"/><path stroke="#f23645" stroke-width="1.6" d="M1468.9 667.1V697.3"/><path stroke="#f23645" stroke-width="2.9" d="M1468.9 678.4V693.0"/><path stroke="#089981" stroke-width="1.6" d="M1470.6 638.1V697.7"/><path stroke="#089981" stroke-width="2.9" d="M1470.6 662.6V693.0"/><path stroke="#f23645" stroke-width="1.6" d="M1472.2 649.0V689.6M1473.9 672.2V775.5"/><path stroke="#f23645" stroke-width="2.9" d="M1472.2 662.6V681.4M1473.9 681.4V699.1"/><path stroke="#089981" stroke-width="1.6" d="M1475.6 665.8V705.7"/><path stroke="#089981" stroke-width="2.9" d="M1475.6 695.0V699.1"/><path stroke="#f23645" stroke-width="1.6" d="M1477.2 692.5V751.1M1478.9 703.0V737.3"/><path stroke="#f23645" stroke-width="2.9" d="M1477.2 695.0V705.9M1478.9 705.9V718.5"/><path stroke="#089981" stroke-width="1.6" d="M1480.6 687.6V727.9M1482.2 672.5V697.7"/><path stroke="#089981" stroke-width="2.9" d="M1480.6 692.5V718.5M1482.2 688.0V692.5"/><path stroke="#f23645" stroke-width="1.6" d="M1483.9 685.6V725.7M1485.6 702.9V771.4M1487.2 736.1V812.1"/><path stroke="#f23645" stroke-width="2.9" d="M1483.9 688.0V724.0M1485.6 724.0V745.7M1487.2 745.7V776.9"/><path stroke="#089981" stroke-width="1.6" d="M1488.9 739.1V806.7M1490.6 742.5V787.2M1492.2 731.7V760.6M1493.9 669.3V760.2"/><path stroke="#089981" stroke-width="2.9" d="M1488.9 762.8V776.9M1490.6 745.6V762.8M1492.2 740.9V745.6M1493.9 707.5V740.9"/><path stroke="#f23645" stroke-width="1.6" d="M1495.6 678.8V721.8M1497.2 713.9V908.4"/><path stroke="#f23645" stroke-width="2.9" d="M1495.6 707.5V720.7M1497.2 720.7V863.8"/><path stroke="#089981" stroke-width="1.6" d="M1498.9 848.8V1128.7M1500.6 859.6V905.2"/><path stroke="#089981" stroke-width="2.9" d="M1498.9 863.8V901.1M1500.6 896.6V901.1"/><path stroke="#f23645" stroke-width="1.6" d="M1502.2 894.8V943.6"/><path stroke="#f23645" stroke-width="2.9" d="M1502.2 896.6V931.7"/><path stroke="#089981" stroke-width="1.6" d="M1503.9 871.8V940.6"/><path stroke="#089981" stroke-width="2.9" d="M1503.9 907.0V931.7"/><path stroke="#f23645" stroke-width="1.6" d="M1505.6 900.3V973.4M1507.2 938.8V987.0"/><path stroke="#f23645" stroke-width="2.9" d="M1505.6 907.0V942.4M1507.2 942.4V965.6"/><path stroke="#089981" stroke-width="1.6" d="M1508.9 955.4V969.0M1510.5 919.2V970.0"/><path stroke="#089981" stroke-width="2.9" d="M1508.9 961.8V965.6M1510.5 948.8V961.8"/><path stroke="#f23645" stroke-width="1.6" d="M1512.2 940.8V977.5"/><path stroke="#f23645" stroke-width="2.9" d="M1512.2 948.8V950.2"/><path stroke="#089981" stroke-width="1.6" d="M1513.9 893.5V953.4"/><path stroke="#089981" stroke-width="2.9" d="M1513.9 921.4V950.2"/><path stroke="#f23645" stroke-width="1.6" d="M1515.5 917.0V936.8"/><path stroke="#f23645" stroke-width="2.9" d="M1515.5 921.4V934.3"/><path stroke="#089981" stroke-width="1.6" d="M1517.2 893.5V934.6"/><path stroke="#089981" stroke-width="2.9" d="M1517.2 913.8V931.6"/><path stroke="#f23645" stroke-width="1.6" d="M1518.9 910.7V933.5"/><path stroke="#f23645" stroke-width="2.9" d="M1518.9 913.8V932.9"/><path stroke="#089981" stroke-width="1.6" d="M1520.5 926.8V947.7M1522.2 874.5V930.4"/><path stroke="#089981" stroke-width="2.9" d="M1520.5 928.6V932.9M1522.2 914.5V928.6"/><path stroke="#f23645" stroke-width="1.6" d="M1523.9 904.5V958.5"/><path stroke="#f23645" stroke-width="2.9" d="M1523.9 914.5V958.5"/><path stroke="#089981" stroke-width="1.6" d="M1525.5 893.6V958.5"/><path stroke="#089981" stroke-width="2.9" d="M1525.5 897.9V958.5"/><path stroke="#f23645" stroke-width="1.6" d="M1527.2 875.9V908.1M1528.9 894.7V954.5"/><path stroke="#f23645" stroke-width="2.9" d="M1527.2 897.9V906.6M1528.9 906.6V929.4"/><path stroke="#089981" stroke-width="1.6" d="M1530.5 903.7V936.2M1532.2 868.6V917.9"/><path stroke="#089981" stroke-width="2.9" d="M1530.5 906.8V929.4M1532.2 881.3V906.8"/><path stroke="#f23645" stroke-width="1.6" d="M1533.9 878.0V963.3M1535.5 955.4V1010.9M1537.2 991.4V1019.7M1538.9 1008.9V1082.3"/><path stroke="#f23645" stroke-width="2.9" d="M1533.9 881.3V962.3M1535.5 962.3V1005.4M1537.2 1005.4V1015.4M1538.9 1015.4V1069.9"/><path stroke="#089981" stroke-width="1.6" d="M1540.5 1033.9V1143.6"/><path stroke="#089981" stroke-width="2.9" d="M1540.5 1053.3V1069.9"/><path stroke="#f23645" stroke-width="1.6" d="M1542.2 1000.0V1090.9"/><path stroke="#f23645" stroke-width="2.9" d="M1542.2 1053.3V1080.6"/><path stroke="#089981" stroke-width="1.6" d="M1543.9 1042.0V1083.3"/><path stroke="#089981" stroke-width="2.9" d="M1543.9 1069.5V1080.6"/><path stroke="#f23645" stroke-width="1.6" d="M1545.5 1043.3V1135.5M1547.2 1104.8V1172.9"/><path stroke="#f23645" stroke-width="2.9" d="M1545.5 1069.5V1110.0M1547.2 1110.0V1134.4"/><path stroke="#089981" stroke-width="1.6" d="M1548.9 1088.2V1135.6M1550.5 1057.7V1097.2"/><path stroke="#089981" stroke-width="2.9" d="M1548.9 1092.4V1134.4M1550.5 1064.1V1092.4"/><path stroke="#f23645" stroke-width="1.6" d="M1552.2 1057.7V1087.0M1553.9 1060.2V1132.8M1555.5 1130.4V1170.3M1557.2 1157.8V1235.8M1558.9 1192.8V1255.3"/><path stroke="#f23645" stroke-width="2.9" d="M1552.2 1064.1V1080.5M1553.9 1080.5V1131.1M1555.5 1131.1V1162.9M1557.2 1162.9V1205.0M1558.9 1205.0V1218.9"/><path stroke="#089981" stroke-width="1.6" d="M1560.5 1184.3V1233.2"/><path stroke="#089981" stroke-width="2.9" d="M1560.5 1210.4V1218.9"/><path stroke="#f23645" stroke-width="1.6" d="M1562.2 1206.2V1231.7"/><path stroke="#f23645" stroke-width="2.9" d="M1562.2 1210.4V1213.8"/><path stroke="#089981" stroke-width="1.6" d="M1563.9 1185.6V1230.9"/><path stroke="#089981" stroke-width="2.9" d="M1563.9 1188.1V1213.8"/><path stroke="#f23645" stroke-width="1.6" d="M1565.5 1185.6V1200.7M1567.2 1191.8V1216.8M1568.9 1196.5V1214.1"/><path stroke="#f23645" stroke-width="2.9" d="M1565.5 1188.1V1193.9M1567.2 1193.9V1200.7M1568.9 1200.7V1202.6"/><path stroke="#089981" stroke-width="1.6" d="M1570.5 1188.5V1208.4M1572.2 1145.8V1195.7"/><path stroke="#089981" stroke-width="2.9" d="M1570.5 1194.3V1202.6M1572.2 1158.9V1194.3"/><path stroke="#f23645" stroke-width="1.6" d="M1573.9 1158.1V1192.4M1575.5 1175.8V1187.3M1577.2 1179.3V1192.4"/><path stroke="#f23645" stroke-width="2.9" d="M1573.9 1158.9V1176.7M1575.5 1176.7V1186.4M1577.2 1186.4V1188.5"/><path stroke="#089981" stroke-width="1.6" d="M1578.9 1161.7V1191.9M1580.5 1134.1V1166.7M1582.2 1137.7V1155.9"/><path stroke="#089981" stroke-width="2.9" d="M1578.9 1162.5V1188.5M1580.5 1149.5V1162.5M1582.2 1149.4V1150.4"/><path stroke="#f23645" stroke-width="1.6" d="M1583.9 1146.1V1173.4"/><path stroke="#f23645" stroke-width="2.9" d="M1583.9 1149.4V1168.3"/><path stroke="#089981" stroke-width="1.6" d="M1585.5 1151.6V1177.1"/><path stroke="#089981" stroke-width="2.9" d="M1585.5 1165.5V1168.3"/><path stroke="#f23645" stroke-width="1.6" d="M1587.2 1155.2V1203.7M1588.9 1199.7V1247.9M1590.5 1216.5V1250.7"/><path stroke="#f23645" stroke-width="2.9" d="M1587.2 1165.5V1202.3M1588.9 1202.3V1217.0M1590.5 1217.0V1230.0"/><path stroke="#089981" stroke-width="1.6" d="M1592.2 1216.4V1232.1M1593.9 1195.1V1221.4M1595.5 1186.2V1218.6"/><path stroke="#089981" stroke-width="2.9" d="M1592.2 1218.7V1230.0M1593.9 1212.1V1218.7M1595.5 1204.4V1212.1"/><path stroke="#f23645" stroke-width="1.6" d="M1597.2 1199.1V1256.9M1598.9 1220.7V1246.5"/><path stroke="#f23645" stroke-width="2.9" d="M1597.2 1204.4V1221.5M1598.9 1221.5V1243.8"/><path stroke="#089981" stroke-width="1.6" d="M1600.5 1228.5V1254.2"/><path stroke="#089981" stroke-width="2.9" d="M1600.5 1241.3V1243.8"/><path stroke="#f23645" stroke-width="1.6" d="M1602.2 1230.1V1375.3M1603.9 1258.5V1368.5M1605.5 1323.4V1342.5"/><path stroke="#f23645" stroke-width="2.9" d="M1602.2 1241.3V1260.4M1603.9 1260.4V1328.9M1605.5 1328.9V1338.9"/><path stroke="#089981" stroke-width="1.6" d="M1607.2 1279.1V1384.2M1608.8 1303.4V1353.6M1610.5 1285.9V1342.8"/><path stroke="#089981" stroke-width="2.9" d="M1607.2 1313.7V1338.9M1608.8 1309.5V1313.7M1610.5 1308.7V1309.7"/><path stroke="#f23645" stroke-width="1.6" d="M1612.2 1293.9V1319.6"/><path stroke="#f23645" stroke-width="2.9" d="M1612.2 1308.7V1314.5"/><path stroke="#089981" stroke-width="1.6" d="M1613.8 1297.2V1316.4M1615.5 1277.8V1300.2"/><path stroke="#089981" stroke-width="2.9" d="M1613.8 1297.8V1314.5M1615.5 1279.9V1297.8"/><path stroke="#f23645" stroke-width="1.6" d="M1617.2 1277.8V1306.8M1618.8 1303.0V1330.6"/><path stroke="#f23645" stroke-width="2.9" d="M1617.2 1279.9V1304.9M1618.8 1304.9V1311.8"/><path stroke="#089981" stroke-width="1.6" d="M1620.5 1305.3V1318.3"/><path stroke="#089981" stroke-width="2.9" d="M1620.5 1307.5V1311.8"/><path stroke="#f23645" stroke-width="1.6" d="M1622.2 1299.4V1317.4"/><path stroke="#f23645" stroke-width="2.9" d="M1622.2 1307.5V1312.7"/><path stroke="#089981" stroke-width="1.6" d="M1623.8 1299.4V1321.1M1625.5 1304.5V1321.1M1627.2 1289.4V1310.4M1628.8 1257.9V1330.6M1630.5 1227.6V1263.3M1632.2 1238.8V1265.6M1633.8 1220.3V1247.0"/><path stroke="#089981" stroke-width="2.9" d="M1623.8 1309.3V1312.7M1625.5 1307.5V1309.3M1627.2 1294.7V1307.5M1628.8 1262.5V1294.7M1630.5 1243.4V1262.5M1632.2 1242.9V1243.9M1633.8 1230.1V1242.9"/><path stroke="#f23645" stroke-width="1.6" d="M1635.5 1222.5V1236.3"/><path stroke="#f23645" stroke-width="2.9" d="M1635.5 1230.1V1232.8"/><path stroke="#089981" stroke-width="1.6" d="M1637.2 1220.3V1238.1"/><path stroke="#089981" stroke-width="2.9" d="M1637.2 1227.0V1232.8"/><path stroke="#f23645" stroke-width="1.6" d="M1638.8 1225.4V1257.4"/><path stroke="#f23645" stroke-width="2.9" d="M1638.8 1227.0V1244.0"/><path stroke="#089981" stroke-width="1.6" d="M1640.5 1224.9V1244.9"/><path stroke="#089981" stroke-width="2.9" d="M1640.5 1234.8V1244.0"/><path stroke="#f23645" stroke-width="1.6" d="M1642.2 1227.6V1262.3"/><path stroke="#f23645" stroke-width="2.9" d="M1642.2 1234.8V1242.0"/><path stroke="#089981" stroke-width="1.6" d="M1643.8 1214.6V1242.8M1645.5 1215.4V1237.9M1647.2 1214.9V1230.3"/><path stroke="#089981" stroke-width="2.9" d="M1643.8 1225.9V1242.0M1645.5 1220.7V1225.9M1647.2 1219.9V1220.9"/><path stroke="#f23645" stroke-width="1.6" d="M1648.8 1216.5V1254.5M1650.5 1217.4V1239.2"/><path stroke="#f23645" stroke-width="2.9" d="M1648.8 1219.9V1230.3M1650.5 1230.3V1236.9"/><path stroke="#089981" stroke-width="1.6" d="M1652.2 1212.2V1255.3"/><path stroke="#089981" stroke-width="2.9" d="M1652.2 1213.4V1236.9"/><path stroke="#f23645" stroke-width="1.6" d="M1653.8 1222.2V1243.9"/><path stroke="#f23645" stroke-width="2.9" d="M1653.8 1222.2V1226.5"/><path stroke="#089981" stroke-width="1.6" d="M1655.5 1176.2V1230.0M1657.2 1043.8V1185.5M1658.8 998.6V1056.6M1660.5 951.7V1026.2M1662.2 944.1V998.4"/><path stroke="#089981" stroke-width="2.9" d="M1655.5 1180.7V1226.5M1657.2 1054.2V1180.7M1658.8 1008.5V1054.2M1660.5 995.9V1008.5M1662.2 967.5V995.9"/><path stroke="#f23645" stroke-width="1.6" d="M1663.8 912.9V1004.4M1665.5 919.2V976.5"/><path stroke="#f23645" stroke-width="2.9" d="M1663.8 967.5V968.5M1665.5 968.5V975.6"/><path stroke="#089981" stroke-width="1.6" d="M1667.2 969.2V1003.2M1668.8 943.6V977.9"/><path stroke="#089981" stroke-width="2.9" d="M1667.2 973.0V975.6M1668.8 970.1V973.0"/><path stroke="#f23645" stroke-width="1.6" d="M1670.5 969.1V1014.0M1672.2 981.0V1056.0"/><path stroke="#f23645" stroke-width="2.9" d="M1670.5 970.1V987.7M1672.2 987.7V1001.9"/><path stroke="#089981" stroke-width="1.6" d="M1673.8 965.2V1003.0M1675.5 970.3V1015.4M1677.2 961.2V994.7M1678.8 928.7V980.1M1680.5 914.6V962.3"/><path stroke="#089981" stroke-width="2.9" d="M1673.8 988.0V1001.9M1675.5 979.6V988.0M1677.2 975.3V979.6M1678.8 959.5V975.3M1680.5 950.5V959.5"/><path stroke="#f23645" stroke-width="1.6" d="M1682.2 941.7V995.0M1683.8 962.5V1006.7"/><path stroke="#f23645" stroke-width="2.9" d="M1682.2 950.5V979.0M1683.8 979.0V987.6"/><path stroke="#089981" stroke-width="1.6" d="M1685.5 964.1V1000.5"/><path stroke="#089981" stroke-width="2.9" d="M1685.5 968.7V987.6"/><path stroke="#f23645" stroke-width="1.6" d="M1687.2 921.9V975.1"/><path stroke="#f23645" stroke-width="2.9" d="M1687.2 968.7V969.7"/><path stroke="#089981" stroke-width="1.6" d="M1688.8 918.7V970.8"/><path stroke="#089981" stroke-width="2.9" d="M1688.8 919.8V969.3"/><path stroke="#f23645" stroke-width="1.6" d="M1690.5 895.6V944.9M1692.2 916.5V991.0M1693.8 954.1V989.8M1695.5 982.0V1007.8"/><path stroke="#f23645" stroke-width="2.9" d="M1690.5 919.8V929.9M1692.2 929.9V952.6M1693.8 958.2V989.1M1695.5 989.1V1007.8"/><path stroke="#089981" stroke-width="1.6" d="M1697.2 936.4V1007.8"/><path stroke="#089981" stroke-width="2.9" d="M1697.2 939.9V1007.8"/><path stroke="#f23645" stroke-width="1.6" d="M1698.8 940.8V953.7M1700.5 933.5V967.3M1702.2 958.9V1033.0M1703.8 986.8V1035.7"/><path stroke="#f23645" stroke-width="2.9" d="M1698.8 940.8V952.8M1700.5 952.8V961.6M1702.2 961.6V989.0M1703.8 989.0V1008.9"/><path stroke="#089981" stroke-width="1.6" d="M1705.5 978.8V1010.1"/><path stroke="#089981" stroke-width="2.9" d="M1705.5 978.8V1008.9"/><path stroke="#f23645" stroke-width="1.6" d="M1707.1 958.6V1001.8"/><path stroke="#f23645" stroke-width="2.9" d="M1707.1 966.2V986.4"/><path stroke="#089981" stroke-width="1.6" d="M1708.8 928.7V1001.0M1710.5 882.0V948.1M1712.1 863.1V914.2"/><path stroke="#089981" stroke-width="2.9" d="M1708.8 941.7V986.4M1710.5 907.2V941.7M1712.1 901.7V907.2"/><path stroke="#f23645" stroke-width="1.6" d="M1713.8 900.3V961.3M1715.5 950.1V1016.7"/><path stroke="#f23645" stroke-width="2.9" d="M1713.8 901.7V951.8M1715.5 951.8V971.8"/><path stroke="#089981" stroke-width="1.6" d="M1717.1 946.3V976.4"/><path stroke="#089981" stroke-width="2.9" d="M1717.1 967.9V971.8"/><path stroke="#f23645" stroke-width="1.6" d="M1718.8 957.9V999.1"/><path stroke="#f23645" stroke-width="2.9" d="M1718.8 967.9V979.7"/><path stroke="#089981" stroke-width="1.6" d="M1720.5 932.7V1003.5"/><path stroke="#089981" stroke-width="2.9" d="M1720.5 947.0V979.7"/><path stroke="#f23645" stroke-width="1.6" d="M1722.1 942.4V1016.7M1723.8 955.8V1000.9M1725.5 992.4V1007.1M1727.1 972.0V1092.6M1728.8 1003.3V1067.7M1730.5 1059.3V1129.2"/><path stroke="#f23645" stroke-width="2.9" d="M1722.1 947.0V990.6M1723.8 990.6V994.2M1725.5 994.2V1005.7M1727.1 1005.7V1009.5M1728.8 1009.5V1060.8M1730.5 1060.8V1090.7"/><path stroke="#089981" stroke-width="1.6" d="M1732.1 1039.6V1103.4M1733.8 1002.4V1045.3"/><path stroke="#089981" stroke-width="2.9" d="M1732.1 1041.4V1090.7M1733.8 1030.1V1041.4"/><path stroke="#f23645" stroke-width="1.6" d="M1735.5 1028.0V1035.7"/><path stroke="#f23645" stroke-width="2.9" d="M1735.5 1030.1V1035.7"/><path stroke="#089981" stroke-width="1.6" d="M1737.1 988.8V1035.7"/><path stroke="#089981" stroke-width="2.9" d="M1737.1 997.6V1035.7"/><path stroke="#f23645" stroke-width="1.6" d="M1738.8 995.2V1034.3M1740.5 997.3V1034.3"/><path stroke="#f23645" stroke-width="2.9" d="M1738.8 997.6V1002.4M1740.5 1002.4V1019.3"/><path stroke="#089981" stroke-width="1.6" d="M1742.1 986.9V1034.2M1743.8 988.3V1021.6"/><path stroke="#089981" stroke-width="2.9" d="M1742.1 1013.9V1019.3M1743.8 1011.7V1013.9"/><path stroke="#f23645" stroke-width="1.6" d="M1745.5 1007.1V1035.7"/><path stroke="#f23645" stroke-width="2.9" d="M1745.5 1011.7V1019.7"/><path stroke="#089981" stroke-width="1.6" d="M1747.1 990.0V1038.4M1748.8 948.2V994.1"/><path stroke="#089981" stroke-width="2.9" d="M1747.1 991.7V1019.7M1748.8 959.6V991.7"/><path stroke="#f23645" stroke-width="1.6" d="M1750.5 958.9V1004.0"/><path stroke="#f23645" stroke-width="2.9" d="M1750.5 959.6V984.8"/><path stroke="#089981" stroke-width="1.6" d="M1752.1 969.5V988.3M1753.8 950.3V977.5M1755.5 963.4V966.3"/><path stroke="#089981" stroke-width="2.9" d="M1752.1 976.3V984.8M1753.8 963.2V976.3M1755.5 963.4V964.4"/><path stroke="#f23645" stroke-width="1.6" d="M1757.1 950.3V991.4"/><path stroke="#f23645" stroke-width="2.9" d="M1757.1 963.4V986.7"/><path stroke="#089981" stroke-width="1.6" d="M1758.8 917.7V984.0M1760.5 821.4V939.7M1762.1 807.9V843.7"/><path stroke="#089981" stroke-width="2.9" d="M1758.8 929.1V979.0M1760.5 842.6V929.1M1762.1 822.5V842.6"/><path stroke="#f23645" stroke-width="1.6" d="M1763.8 808.7V854.0"/><path stroke="#f23645" stroke-width="2.9" d="M1763.8 822.5V840.7"/><path stroke="#089981" stroke-width="1.6" d="M1765.5 814.7V847.0"/><path stroke="#089981" stroke-width="2.9" d="M1765.5 816.6V840.7"/><path stroke="#f23645" stroke-width="1.6" d="M1767.1 790.8V847.2"/><path stroke="#f23645" stroke-width="2.9" d="M1767.1 816.6V838.2"/><path stroke="#089981" stroke-width="1.6" d="M1768.8 771.3V838.9M1770.5 672.4V782.5M1772.1 655.7V690.4M1773.8 585.7V682.4M1775.5 589.1V608.7M1777.1 534.2V608.2M1778.8 522.0V562.5"/><path stroke="#089981" stroke-width="2.9" d="M1768.8 774.9V838.2M1770.5 688.6V774.9M1772.1 663.4V688.6M1773.8 605.9V663.4M1775.5 605.6V606.6M1777.1 558.8V605.6M1778.8 530.1V558.8"/><path stroke="#f23645" stroke-width="1.6" d="M1780.5 542.9V604.7M1782.1 554.5V636.6"/><path stroke="#f23645" stroke-width="2.9" d="M1780.5 542.9V579.9M1782.1 579.9V591.8"/><path stroke="#089981" stroke-width="1.6" d="M1783.8 552.6V643.9M1785.5 537.9V619.6M1787.1 545.0V559.9M1788.8 514.7V554.1"/><path stroke="#089981" stroke-width="2.9" d="M1783.8 568.3V591.8M1785.5 550.7V568.3M1787.1 545.0V550.7M1788.8 534.8V544.9"/><path stroke="#f23645" stroke-width="1.6" d="M1790.5 494.1V564.0M1792.1 513.1V572.1M1793.8 512.5V585.7M1795.5 529.3V584.7M1797.1 515.2V621.4M1798.8 596.4V692.7"/><path stroke="#f23645" stroke-width="2.9" d="M1790.5 534.8V541.0M1792.1 541.0V555.6M1793.8 555.6V563.5M1795.5 563.5V574.3M1797.1 574.3V619.3M1798.8 619.3V652.6"/><path stroke="#089981" stroke-width="1.6" d="M1800.5 580.1V697.3M1802.1 564.5V641.2"/><path stroke="#089981" stroke-width="2.9" d="M1800.5 615.8V652.6M1802.1 586.3V615.8"/><path stroke="#f23645" stroke-width="1.6" d="M1803.8 570.8V633.1"/><path stroke="#f23645" stroke-width="2.9" d="M1803.8 586.3V608.7"/><path stroke="#089981" stroke-width="1.6" d="M1805.4 571.8V625.0M1807.1 490.5V595.2M1808.8 413.6V541.7M1810.4 359.8V465.3M1812.1 329.8V416.7M1813.8 344.9V409.0M1815.4 250.1V396.4M1817.1 199.1V283.9"/><path stroke="#089981" stroke-width="2.9" d="M1805.4 604.8V608.7M1807.1 527.8V595.2M1808.8 462.5V527.8M1810.4 415.6V462.5M1812.1 377.6V415.6M1813.8 358.4V377.6M1815.4 278.9V358.4M1817.1 234.7V278.9"/><path stroke="#f23645" stroke-width="1.6" d="M1818.8 197.8V308.5M1820.4 238.4V343.6M1822.1 288.5V337.0"/><path stroke="#f23645" stroke-width="2.9" d="M1818.8 234.7V273.3M1820.4 273.3V297.0M1822.1 297.0V311.9"/><path stroke="#089981" stroke-width="1.6" d="M1823.8 271.7V331.0"/><path stroke="#089981" stroke-width="2.9" d="M1823.8 298.6V311.9"/><path stroke="#f23645" stroke-width="1.6" d="M1825.4 304.3V351.4M1827.1 319.3V449.2"/><path stroke="#f23645" stroke-width="2.9" d="M1825.4 304.3V327.3M1827.1 327.3V399.2"/><path stroke="#089981" stroke-width="1.6" d="M1828.8 340.8V450.1M1830.4 331.3V401.8M1832.1 164.7V359.7M1833.8 184.2V243.3M1835.4 139.8V228.4"/><path stroke="#089981" stroke-width="2.9" d="M1828.8 398.7V399.7M1830.4 337.4V398.7M1832.1 252.6V337.4M1833.8 226.2V243.3M1835.4 222.7V226.2"/><path stroke="#f23645" stroke-width="1.6" d="M1837.1 195.3V355.8"/><path stroke="#f23645" stroke-width="2.9" d="M1837.1 222.7V289.7"/><path stroke="#089981" stroke-width="1.6" d="M1838.8 273.2V362.5M1840.4 241.9V290.3"/><path stroke="#089981" stroke-width="2.9" d="M1838.8 286.6V289.7M1840.4 274.9V286.6"/><path stroke="#f23645" stroke-width="1.6" d="M1842.1 252.8V327.4M1843.8 293.4V382.3"/><path stroke="#f23645" stroke-width="2.9" d="M1842.1 274.9V308.6M1843.8 308.6V361.4"/><path stroke="#089981" stroke-width="1.6" d="M1845.4 333.9V364.8M1847.1 299.4V340.1"/><path stroke="#089981" stroke-width="2.9" d="M1845.4 335.2V361.4M1847.1 330.4V335.2"/><path stroke="#f23645" stroke-width="1.6" d="M1848.8 301.6V399.1"/><path stroke="#f23645" stroke-width="2.9" d="M1848.8 330.4V356.0"/><path stroke="#089981" stroke-width="1.6" d="M1850.4 338.8V382.8M1852.1 302.1V350.8"/><path stroke="#089981" stroke-width="2.9" d="M1850.4 340.1V356.0M1852.1 336.0V340.1"/><path stroke="#f23645" stroke-width="1.6" d="M1853.8 304.3V380.1"/><path stroke="#f23645" stroke-width="2.9" d="M1853.8 336.0V361.7"/><path stroke="#089981" stroke-width="1.6" d="M1855.4 301.6V428.4"/><path stroke="#089981" stroke-width="2.9" d="M1855.4 359.6V361.7"/><path stroke="#f23645" stroke-width="1.6" d="M1857.1 357.2V390.4M1858.8 370.1V398.9"/><path stroke="#f23645" stroke-width="2.9" d="M1857.1 359.6V377.5M1858.8 377.5V381.8"/><path stroke="#089981" stroke-width="1.6" d="M1860.4 363.6V387.8M1862.1 336.8V374.4M1863.8 301.4V354.3M1865.4 285.7V327.9M1867.1 212.1V302.3M1868.8 205.4V287.5"/><path stroke="#089981" stroke-width="2.9" d="M1860.4 368.1V381.8M1862.1 352.0V368.1M1863.8 325.8V352.0M1865.4 301.8V325.8M1867.1 263.3V301.8M1868.8 234.8V263.3"/><path stroke="#f23645" stroke-width="1.6" d="M1870.4 230.6V284.6M1872.1 238.7V312.4M1873.8 270.3V324.6"/><path stroke="#f23645" stroke-width="2.9" d="M1870.4 234.8V269.0M1872.1 269.0V272.1M1873.8 272.1V299.4"/><path stroke="#089981" stroke-width="1.6" d="M1875.4 254.4V340.8"/><path stroke="#089981" stroke-width="2.9" d="M1875.4 276.4V299.4"/><path stroke="#f23645" stroke-width="1.6" d="M1877.1 247.9V303.2M1878.8 256.8V320.5"/><path stroke="#f23645" stroke-width="2.9" d="M1877.1 276.4V277.7M1878.8 277.7V304.9"/><path stroke="#089981" stroke-width="1.6" d="M1880.4 294.8V314.9"/><path stroke="#089981" stroke-width="2.9" d="M1880.4 294.8V304.9"/><path stroke="#f23645" stroke-width="1.6" d="M1882.1 294.8V453.3M1883.8 323.7V409.9M1885.4 392.3V414.0M1887.1 400.3V447.9M1888.8 396.7V536.0M1890.4 475.3V523.5"/><path stroke="#f23645" stroke-width="2.9" d="M1882.1 294.8V328.5M1883.8 328.5V399.0M1885.4 399.0V408.8M1887.1 408.8V424.9M1888.8 424.9V481.4M1890.4 481.4V488.7"/><path stroke="#089981" stroke-width="1.6" d="M1892.1 473.8V484.5M1893.8 429.5V484.1M1895.4 389.6V457.9"/><path stroke="#089981" stroke-width="2.9" d="M1892.1 475.1V484.5M1893.8 442.1V475.1M1895.4 393.1V442.1"/><path stroke="#f23645" stroke-width="1.6" d="M1897.1 386.1V425.5"/><path stroke="#f23645" stroke-width="2.9" d="M1897.1 393.1V410.8"/><path stroke="#089981" stroke-width="1.6" d="M1898.8 349.0V411.7M1900.4 288.0V348.3M1902.1 265.0V330.1"/><path stroke="#089981" stroke-width="2.9" d="M1898.8 349.0V410.8M1900.4 303.3V346.3M1902.1 267.6V303.3"/><path stroke="#f23645" stroke-width="1.6" d="M1903.7 264.6V319.2"/><path stroke="#f23645" stroke-width="2.9" d="M1903.7 267.6V294.4"/><path stroke="#089981" stroke-width="1.6" d="M1905.4 257.7V295.7"/><path stroke="#089981" stroke-width="2.9" d="M1905.4 257.7V294.4"/><path stroke="#f23645" stroke-width="1.6" d="M1907.1 214.8V280.2M1908.7 208.6V323.2M1910.4 278.5V330.0M1912.1 288.0V379.6M1913.7 288.0V668.7M1915.4 428.9V595.0"/><path stroke="#f23645" stroke-width="2.9" d="M1907.1 246.5V254.1M1908.7 254.1V287.4M1910.4 287.4V302.8M1912.1 302.8V342.1M1913.7 342.1V461.3M1915.4 461.3V543.5"/><path stroke="#089981" stroke-width="1.6" d="M1917.1 401.8V576.1M1918.7 369.8V460.4"/><path stroke="#089981" stroke-width="2.9" d="M1917.1 437.5V543.5M1918.7 369.8V437.5"/><path stroke="#f23645" stroke-width="1.6" d="M1920.4 380.1V435.8M1922.1 396.4V510.2M1923.7 442.5V534.6M1925.4 479.9V586.1"/><path stroke="#f23645" stroke-width="2.9" d="M1920.4 380.1V432.0M1922.1 432.0V452.4M1923.7 452.4V482.3M1925.4 482.3V513.6"/><path stroke="#089981" stroke-width="1.6" d="M1927.1 461.4V535.4M1928.7 468.6V506.5M1930.4 442.5V482.3"/><path stroke="#089981" stroke-width="2.9" d="M1927.1 504.3V513.6M1928.7 481.3V504.3M1930.4 478.6V481.3"/><path stroke="#f23645" stroke-width="1.6" d="M1932.1 433.8V503.5M1933.7 473.9V573.3"/><path stroke="#f23645" stroke-width="2.9" d="M1932.1 478.6V498.9M1933.7 498.9V531.5"/><path stroke="#089981" stroke-width="1.6" d="M1935.4 504.5V543.5M1937.1 464.1V509.3M1938.7 478.2V494.3M1940.4 409.9V485.3"/><path stroke="#089981" stroke-width="2.9" d="M1935.4 506.8V531.5M1937.1 488.7V506.8M1938.7 482.2V488.7M1940.4 436.9V482.2"/><path stroke="#f23645" stroke-width="1.6" d="M1942.1 385.0V441.7M1943.7 411.3V475.5"/><path stroke="#f23645" stroke-width="2.9" d="M1942.1 436.9V437.9M1943.7 437.0V472.1"/><path stroke="#089981" stroke-width="1.6" d="M1945.4 460.1V503.1"/><path stroke="#089981" stroke-width="2.9" d="M1945.4 465.4V472.1"/><path stroke="#f23645" stroke-width="1.6" d="M1947.1 489.9V585.5"/><path stroke="#f23645" stroke-width="2.9" d="M1947.1 489.9V512.7"/><path stroke="#089981" stroke-width="1.6" d="M1948.7 494.6V544.4"/><path stroke="#089981" stroke-width="2.9" d="M1948.7 508.3V512.7"/><path stroke="#f23645" stroke-width="1.6" d="M1950.4 503.4V523.6"/><path stroke="#f23645" stroke-width="2.9" d="M1950.4 508.3V521.2"/><path stroke="#089981" stroke-width="1.6" d="M1952.1 501.5V529.4"/><path stroke="#089981" stroke-width="2.9" d="M1952.1 501.5V521.2"/><path stroke="#f23645" stroke-width="1.6" d="M1953.7 502.9V629.0M1955.4 552.8V801.1"/><path stroke="#f23645" stroke-width="2.9" d="M1953.7 502.9V569.6M1955.4 569.6V705.0"/><path stroke="#089981" stroke-width="1.6" d="M1957.1 654.0V763.2M1958.7 656.1V755.0M1960.4 655.6V691.3M1962.1 652.6V697.3M1963.7 605.2V652.8"/><path stroke="#089981" stroke-width="2.9" d="M1957.1 692.0V705.0M1958.7 686.7V692.0M1960.4 676.0V686.7M1962.1 652.6V676.0M1963.7 606.6V640.6"/><path stroke="#f23645" stroke-width="1.6" d="M1965.4 591.6V651.2M1967.1 593.8V629.5M1968.7 616.8V687.3M1970.4 625.0V692.7M1972.1 732.0V797.0M1973.7 735.3V797.6M1975.4 736.9V820.1M1977.1 745.0V836.3M1978.7 763.2V840.4M1980.4 778.1V866.1M1982.1 801.1V894.6M1983.7 864.6V953.7M1985.4 896.0V933.0"/><path stroke="#f23645" stroke-width="2.9" d="M1965.4 606.6V621.4M1967.1 621.4V626.2M1968.7 626.2V638.4M1970.4 638.4V686.8M1972.1 732.0V764.7M1973.7 764.7V765.7M1975.4 764.9V783.9M1977.1 783.9V806.7M1978.7 806.7V834.1M1980.4 834.1V864.0M1982.1 864.0V879.9M1983.7 879.9V898.4M1985.4 898.4V914.2"/><path stroke="#089981" stroke-width="1.6" d="M1987.1 881.0V921.2M1988.7 827.7V908.6M1990.4 849.0V864.5M1992.1 806.5V856.1M1993.7 797.0V855.3M1995.4 787.0V829.6"/><path stroke="#089981" stroke-width="2.9" d="M1987.1 888.2V914.2M1988.7 860.4V888.2M1990.4 850.8V860.4M1992.1 836.8V850.8M1993.7 821.3V836.8M1995.4 808.8V821.3"/><path stroke="#f23645" stroke-width="1.6" d="M1997.1 804.2V833.6M1998.7 803.8V830.8M2000.4 804.0V920.6"/><path stroke="#f23645" stroke-width="2.9" d="M1997.1 808.8V814.2M1998.7 814.2V816.5M2000.4 816.5V848.7"/><path stroke="#089981" stroke-width="1.6" d="M2002.0 745.6V897.3M2003.7 738.0V807.8M2005.4 764.6V813.7M2007.0 753.7V829.6"/><path stroke="#089981" stroke-width="2.9" d="M2002.0 800.3V848.7M2003.7 790.0V800.3M2005.4 788.2V790.0M2007.0 776.5V788.2"/><path stroke="#f23645" stroke-width="1.6" d="M2008.7 763.6V846.1M2010.4 818.5V851.2"/><path stroke="#f23645" stroke-width="2.9" d="M2008.7 776.5V820.6M2010.4 820.6V829.4"/><path stroke="#089981" stroke-width="1.6" d="M2012.0 744.2V839.6M2013.7 681.9V758.3M2015.4 664.3V752.5"/><path stroke="#089981" stroke-width="2.9" d="M2012.0 757.1V829.4M2013.7 734.3V757.1M2015.4 715.8V734.3"/><path stroke="#f23645" stroke-width="1.6" d="M2017.0 707.1V805.2"/><path stroke="#f23645" stroke-width="2.9" d="M2017.0 715.8V766.6"/><path stroke="#089981" stroke-width="1.6" d="M2018.7 725.2V768.1"/><path stroke="#089981" stroke-width="2.9" d="M2018.7 758.1V766.6"/><path stroke="#f23645" stroke-width="1.6" d="M2020.4 746.4V811.9M2022.0 775.4V800.4M2023.7 760.5V807.4M2025.4 793.8V858.0M2027.0 811.9V893.2"/><path stroke="#f23645" stroke-width="2.9" d="M2020.4 758.1V792.2M2022.0 792.2V795.9M2023.7 795.9V806.4M2025.4 806.4V838.1M2027.0 838.1V857.7"/><path stroke="#089981" stroke-width="1.6" d="M2028.7 844.5V900.8M2030.4 816.0V887.8M2032.0 817.4V842.0M2033.7 819.7V843.1"/><path stroke="#089981" stroke-width="2.9" d="M2028.7 845.7V857.7M2030.4 833.8V845.7M2032.0 822.5V833.8M2033.7 820.4V822.5"/><path stroke="#f23645" stroke-width="1.6" d="M2035.4 794.9V824.4M2037.0 810.1V858.0M2038.7 829.6V862.6"/><path stroke="#f23645" stroke-width="2.9" d="M2035.4 820.4V823.0M2037.0 823.0V840.4M2038.7 840.4V846.7"/><path stroke="#089981" stroke-width="1.6" d="M2040.4 841.8V860.7M2042.0 824.7V848.1"/><path stroke="#089981" stroke-width="2.9" d="M2040.4 842.9V846.7M2042.0 832.8V842.9"/><path stroke="#f23645" stroke-width="1.6" d="M2043.7 826.7V840.9M2045.4 803.8V852.6"/><path stroke="#f23645" stroke-width="2.9" d="M2043.7 832.8V837.8M2045.4 837.8V840.3"/><path stroke="#089981" stroke-width="1.6" d="M2047.0 834.7V843.2M2048.7 826.3V836.1M2050.4 813.3V835.5"/><path stroke="#089981" stroke-width="2.9" d="M2047.0 835.3V840.3M2048.7 829.2V835.3M2050.4 823.5V829.2"/><path stroke="#f23645" stroke-width="1.6" d="M2052.0 818.3V849.9"/><path stroke="#f23645" stroke-width="2.9" d="M2052.0 823.5V826.0"/><path stroke="#089981" stroke-width="1.6" d="M2053.7 769.4V831.8M2055.4 776.8V794.5M2057.0 763.2V786.0M2058.7 729.3V777.9"/><path stroke="#089981" stroke-width="2.9" d="M2053.7 782.0V826.0M2055.4 778.8V782.0M2057.0 775.1V778.8M2058.7 735.7V775.1"/><path stroke="#f23645" stroke-width="1.6" d="M2060.4 714.4V736.8M2062.0 717.9V803.8M2063.7 748.2V803.8"/><path stroke="#f23645" stroke-width="2.9" d="M2060.4 735.7V736.7M2062.0 735.8V753.3M2063.7 753.3V789.8"/><path stroke="#089981" stroke-width="1.6" d="M2065.4 776.8V794.8M2067.0 765.4V788.7"/><path stroke="#089981" stroke-width="2.9" d="M2065.4 786.6V789.8M2067.0 769.2V786.6"/><path stroke="#f23645" stroke-width="1.6" d="M2068.7 772.1V786.0"/><path stroke="#f23645" stroke-width="2.9" d="M2068.7 772.1V783.2"/><path stroke="#089981" stroke-width="1.6" d="M2070.4 763.2V799.8M2072.0 688.7V764.7M2073.7 681.1V729.6"/><path stroke="#089981" stroke-width="2.9" d="M2070.4 763.2V783.2M2072.0 719.5V760.1M2073.7 686.0V719.5"/><path stroke="#f23645" stroke-width="1.6" d="M2075.4 688.1V726.0M2077.0 696.8V734.2"/><path stroke="#f23645" stroke-width="2.9" d="M2075.4 688.1V704.5M2077.0 704.5V719.8"/><path stroke="#089981" stroke-width="1.6" d="M2078.7 707.1V732.6"/><path stroke="#089981" stroke-width="2.9" d="M2078.7 708.9V719.8"/><path stroke="#f23645" stroke-width="1.6" d="M2080.4 693.5V745.8M2082.0 713.7V764.5M2083.7 752.3V864.8M2085.4 798.4V868.9M2087.0 809.2V859.4"/><path stroke="#f23645" stroke-width="2.9" d="M2080.4 708.9V723.3M2082.0 723.3V757.9M2083.7 757.9V806.1M2085.4 806.1V832.3M2087.0 832.3V834.0"/><path stroke="#089981" stroke-width="1.6" d="M2088.7 808.4V838.5"/><path stroke="#089981" stroke-width="2.9" d="M2088.7 811.7V834.0"/><path stroke="#f23645" stroke-width="1.6" d="M2090.4 833.6V870.8M2092.0 828.4V896.8"/><path stroke="#f23645" stroke-width="2.9" d="M2090.4 833.6V859.7M2092.0 859.7V860.7"/><path stroke="#089981" stroke-width="1.6" d="M2093.7 826.2V887.8M2095.4 809.2V854.5"/><path stroke="#089981" stroke-width="2.9" d="M2093.7 827.2V859.8M2095.4 820.0V827.2"/><path stroke="#f23645" stroke-width="1.6" d="M2097.0 807.3V840.0M2098.7 816.0V894.2M2100.3 889.3V949.0M2102.0 904.3V1084.0M2103.7 971.6V1073.5M2105.3 1032.5V1115.2"/><path stroke="#f23645" stroke-width="2.9" d="M2097.0 820.0V831.8M2098.7 831.8V892.2M2100.3 892.2V913.8M2102.0 913.8V1008.3M2103.7 1008.3V1049.4M2105.3 1049.4V1102.4"/><path stroke="#089981" stroke-width="1.6" d="M2107.0 1046.1V1104.5"/><path stroke="#089981" stroke-width="2.9" d="M2107.0 1097.9V1102.4"/><path stroke="#f23645" stroke-width="1.6" d="M2108.7 1109.7V1132.8M2110.3 1128.2V1235.8"/><path stroke="#f23645" stroke-width="2.9" d="M2108.7 1109.7V1131.5M2110.3 1131.5V1159.5"/><path stroke="#089981" stroke-width="1.6" d="M2112.0 1153.5V1260.7M2113.7 1140.6V1177.2M2115.3 1118.4V1156.1"/><path stroke="#089981" stroke-width="2.9" d="M2112.0 1154.2V1159.5M2113.7 1151.2V1154.2M2115.3 1139.8V1151.2"/><path stroke="#f23645" stroke-width="1.6" d="M2117.0 1119.2V1160.8M2118.7 1144.9V1173.4M2120.3 1170.0V1203.2"/><path stroke="#f23645" stroke-width="2.9" d="M2117.0 1139.8V1156.7M2118.7 1156.7V1171.3M2120.3 1171.3V1175.5"/><path stroke="#089981" stroke-width="1.6" d="M2122.0 1165.5V1206.5M2123.7 1133.3V1168.0M2125.3 1134.1V1157.5"/><path stroke="#089981" stroke-width="2.9" d="M2122.0 1167.5V1175.5M2123.7 1148.4V1167.5M2125.3 1145.3V1148.4"/><path stroke="#f23645" stroke-width="1.6" d="M2127.0 1141.5V1193.8M2128.7 1162.6V1181.4M2130.3 1176.1V1196.5"/><path stroke="#f23645" stroke-width="2.9" d="M2127.0 1145.3V1171.2M2128.7 1171.2V1177.0M2130.3 1177.0V1185.2"/><path stroke="#089981" stroke-width="1.6" d="M2132.0 1157.2V1197.3"/><path stroke="#089981" stroke-width="2.9" d="M2132.0 1167.9V1185.2"/><path stroke="#f23645" stroke-width="1.6" d="M2133.7 1163.7V1201.9"/><path stroke="#f23645" stroke-width="2.9" d="M2133.7 1167.9V1187.4"/><path stroke="#089981" stroke-width="1.6" d="M2135.3 1177.3V1189.5M2137.0 1171.5V1182.1"/><path stroke="#089981" stroke-width="2.9" d="M2135.3 1179.2V1187.4M2137.0 1177.4V1179.2"/><path stroke="#f23645" stroke-width="1.6" d="M2138.7 1176.3V1200.4M2140.3 1193.7V1224.9"/><path stroke="#f23645" stroke-width="2.9" d="M2138.7 1177.4V1195.0M2140.3 1195.0V1215.7"/><path stroke="#089981" stroke-width="1.6" d="M2142.0 1118.7V1239.8M2143.7 1154.9V1222.7"/><path stroke="#089981" stroke-width="2.9" d="M2142.0 1200.4V1215.7M2143.7 1160.8V1200.4"/><path stroke="#f23645" stroke-width="1.6" d="M2145.3 1140.9V1177.5"/><path stroke="#f23645" stroke-width="2.9" d="M2145.3 1160.8V1166.8"/><path stroke="#089981" stroke-width="1.6" d="M2147.0 1147.7V1169.4"/><path stroke="#089981" stroke-width="2.9" d="M2147.0 1157.3V1159.6"/></g>
</svg>
<div class="leg leg1">Ethereum / U.S. Dollar · 1D · Bitstamp<span class="g" style="left:341px">2,034.2</span><span class="g" style="left:419.5px">+6.5 (+0.32%)</span></div>
<div class="leg leg2">Vol · ETH</div>
<div class="axis">
<div class="pl" style="top:112.2px">5,000.0</div><div class="pl" style="top:181.9px">4,800.0</div><div class="pl" style="top:251.5px">4,600.0</div><div class="pl" style="top:321.2px">4,400.0</div><div class="pl" style="top:390.9px">4,200.0</div><div class="pl" style="top:460.5px">4,000.0</div><div class="pl" style="top:530.2px">3,800.0</div><div class="pl" style="top:599.9px">3,600.0</div><div class="pl" style="top:669.6px">3,400.0</div><div class="pl" style="top:739.2px">3,200.0</div><div class="pl" style="top:808.9px">3,000.0</div><div class="pl" style="top:878.6px">2,800.0</div><div class="pl" style="top:948.2px">2,600.0</div><div class="pl" style="top:1017.9px">2,400.0</div><div class="pl" style="top:1087.6px">2,200.0</div><div class="pl" style="top:1157.2px">2,000.0</div><div class="pl" style="top:1226.9px">1,800.0</div><div class="pl" style="top:1296.6px">1,600.0</div><div class="pl" style="top:1366.3px">1,400.0</div><div class="pl" style="top:1435.9px">1,200.0</div><div class="pl" style="top:1505.6px">1,000.0</div><div class="pl" style="top:1576.7px">800.0</div><div class="pl" style="top:1645.9px">600.0</div>
<div class="tag" style="top:839.8px">2,909.0</div><div class="tag" style="top:1113.7px">2,122.7</div><div class="tag" style="top:1234.9px">1,774.8</div><div class="tag" style="top:1323.6px">1,520.3</div>
<div class="cur"><div class="p">2,034.2</div><div class="t">14:36:11</div></div>
<div class="volt">5.77 K</div>
</div>
<div class="usd">USD</div>
<div class="vsep"></div><div class="hsep"></div>
<div class="taxis"><div class="tl" style="left:-44.8px">Sep</div><div class="tl" style="left:58.0px">Nov</div><div class="tl b" style="left:159.7px">2023</div><div class="tl" style="left:257.6px">Mar</div><div class="tl" style="left:359.1px">May</div><div class="tl" style="left:461.2px">Jul</div><div class="tl" style="left:564.1px">Sep</div><div class="tl" style="left:665.5px">Nov</div><div class="tl b" style="left:767.5px">2024</div><div class="tl" style="left:867.3px">Mar</div><div class="tl" style="left:969.0px">May</div><div class="tl" style="left:1070.9px">Jul</div><div class="tl" style="left:1173.7px">Sep</div><div class="tl" style="left:1275.2px">Nov</div><div class="tl b" style="left:1377.4px">2025</div><div class="tl" style="left:1475.6px">Mar</div><div class="tl" style="left:1576.9px">May</div><div class="tl" style="left:1678.8px">Jul</div><div class="tl" style="left:1782.0px">Sep</div><div class="tl" style="left:1883.8px">Nov</div><div class="tl b" style="left:1985.7px">2026</div><div class="tl" style="left:2084.0px">Mar</div><div class="tl" style="left:2185.1px">May</div><div class="tl" style="left:2287.0px">Jul</div></div>
<svg class="ico" width="60" height="40" viewBox="2118 1632 60 40">
<circle cx="2147.0" cy="1652.4" r="15.15" fill="#131313" stroke="#a444d6" stroke-width="2.4"/>
<path d="M2130.1 1649.8 C2131.3 1654.5 2133.4 1656.6 2138.2 1657.7 C2133.4 1658.8 2131.3 1660.9 2130.1 1665.3 C2128.9 1660.9 2126.8 1658.8 2122 1657.7 C2126.8 1656.6 2128.9 1654.5 2130.1 1649.8Z" fill="#a444d6" stroke="#000" stroke-width="3" paint-order="stroke"/>
<path d="M2151.6 1643.8 L2140.3 1652.5 L2146.4 1653.4 L2141.8 1660.5 L2153.6 1651.4 L2147.7 1650.5 Z" fill="#a444d6"/>
</svg>
<svg class="logo" width="48" height="24" viewBox="0 0 36 18"><path fill="#e0e0e0" d="M14 18H7V7H0V0h14v18zM29 18h-8l7.5-18h8L29 18z"/><circle cx="20" cy="3.6" r="3.6" fill="#e0e0e0"/></svg>
<div class="logot">TradingView</div>
</body></html>
